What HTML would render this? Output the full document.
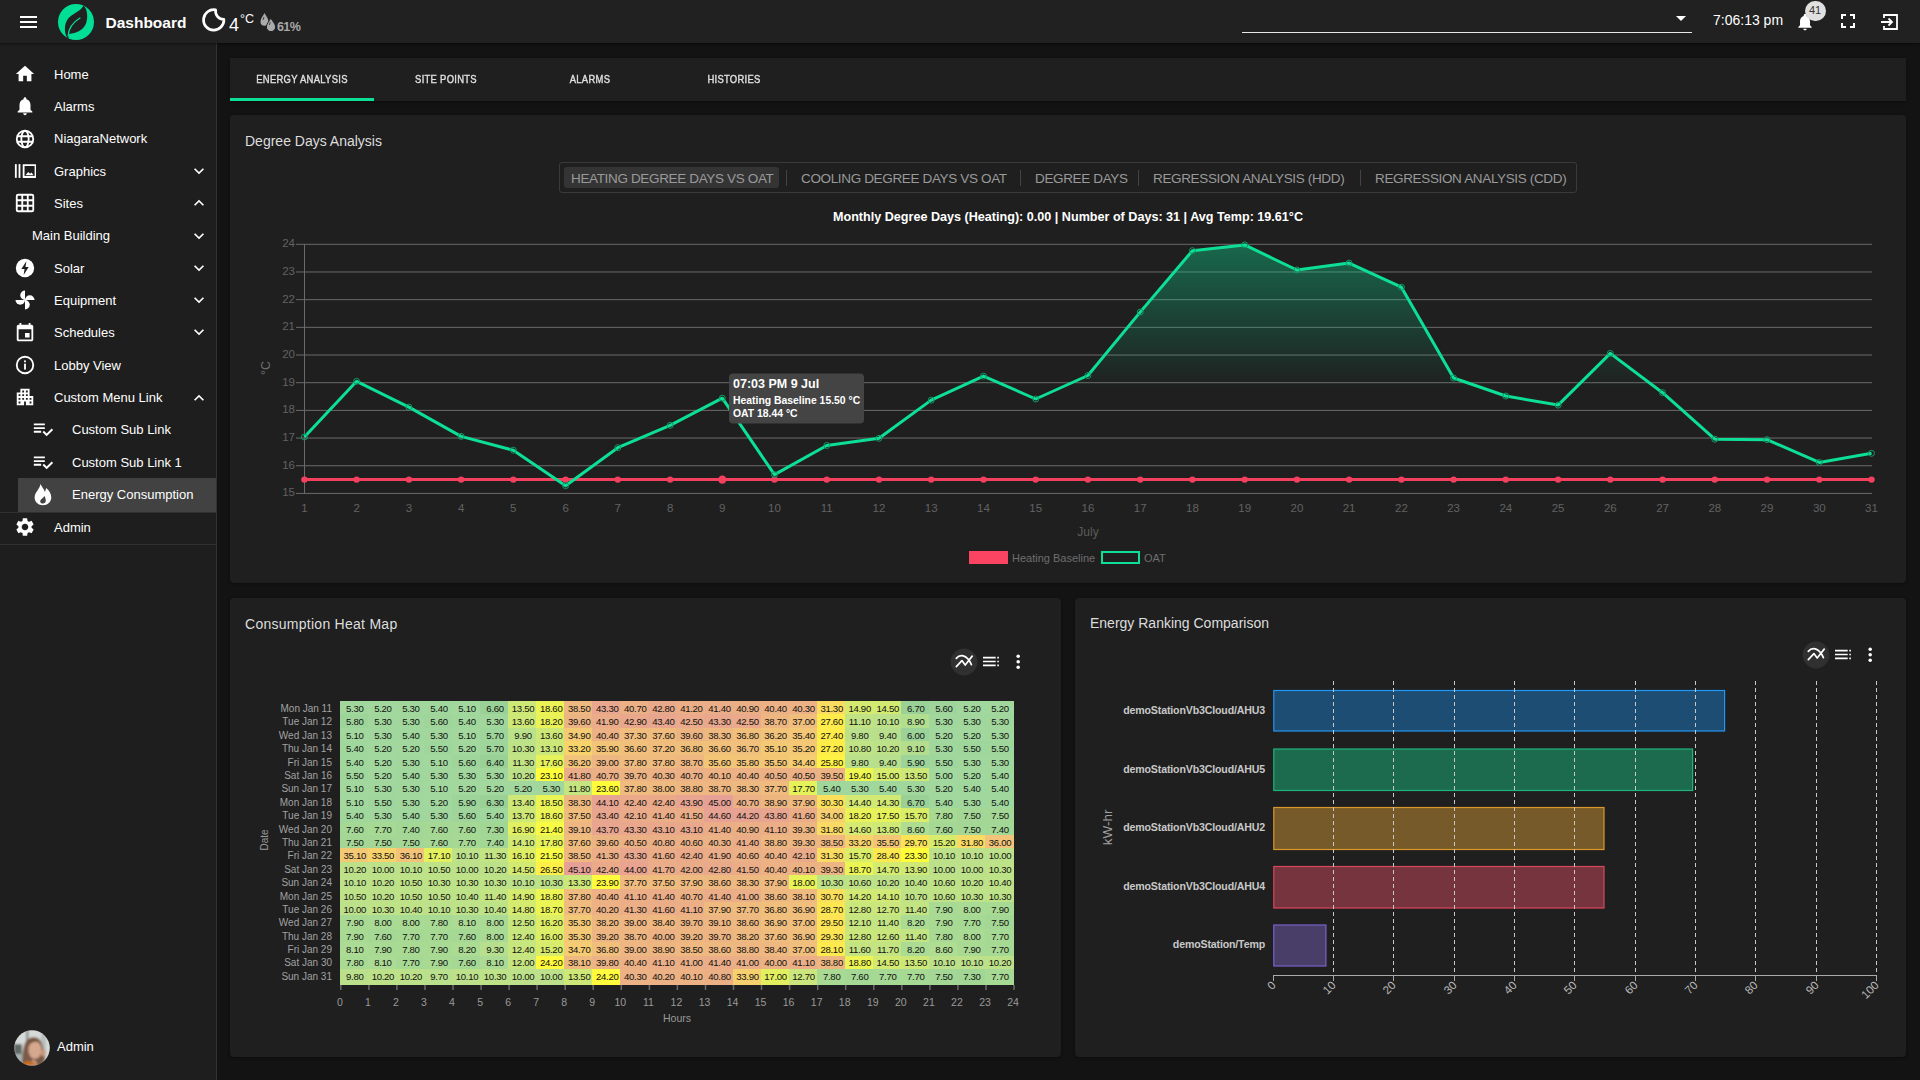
<!DOCTYPE html>
<html><head><meta charset="utf-8">
<style>
*{box-sizing:border-box;margin:0;padding:0}
html,body{width:1920px;height:1080px;overflow:hidden;background:#131313;font-family:"Liberation Sans", sans-serif;color:#fff}
.a{position:absolute}
.t{position:absolute;white-space:nowrap;line-height:1}
svg{position:absolute;overflow:visible}
</style></head><body>

<div class="a" style="left:0;top:43px;width:216px;height:1037px;background:#1e1e1e"></div>
<div class="a" style="left:216px;top:43px;width:1px;height:1037px;background:#333"></div>
<div class="a" style="left:0;top:0;width:1920px;height:43px;background:#212121;box-shadow:0 1px 2px rgba(0,0,0,.5)"></div>
<div class="a" style="left:20px;top:16px;width:17px;height:2px;background:#fff"></div>
<div class="a" style="left:20px;top:21px;width:17px;height:2px;background:#fff"></div>
<div class="a" style="left:20px;top:26px;width:17px;height:2px;background:#fff"></div>
<svg style="left:52px;top:0px" width="48" height="44" viewBox="0 0 48 44">
<circle cx="24" cy="22" r="18" fill="#00df95"/>
<path d="M31.6 5.4 C36.2 10 36 19.5 33.4 24.8 C30.5 30.5 24 33.2 17.2 33.9 L16.2 39 C11.8 33.5 12 25 15.5 19.5 C19.5 13.6 28.2 12 31.6 5.4 Z" fill="#212121"/>
<path d="M16.2 36 C16.5 28.5 20.5 22.5 28 18" stroke="#00df95" stroke-width="1.3" fill="none" stroke-linecap="round"/>
</svg>
<div class="t" style="left:105.5px;top:15px;font-size:15.5px;font-weight:bold;color:#fff">Dashboard</div>
<svg style="left:200px;top:6px" width="28" height="28" viewBox="0 0 28 28">
<path d="M15.6 3.9 A10.2 10.2 0 1 0 23.9 13.4 A8.4 8.4 0 0 1 15.6 3.9 Z" fill="none" stroke="#fff" stroke-width="2.7" stroke-linejoin="round"/>
</svg>
<div class="t" style="left:229px;top:15.5px;font-size:18px;color:#fff">4</div>
<div class="t" style="left:240px;top:13.3px;font-size:12.5px;color:#fff">°C</div>
<svg style="left:258px;top:12px" width="20" height="20" viewBox="0 0 20 20">
<path d="M6.5 1 C8 4 10.5 6.5 10.5 9.8 A4 4 0 0 1 2.5 9.8 C2.5 6.5 5 4 6.5 1Z" fill="#aaa"/>
<path d="M12.8 6 C14.3 9 17.6 12 17.6 15 A4.6 4.6 0 0 1 8.4 15 C8.4 12 11.3 9 12.8 6Z" fill="#aaa" stroke="#212121" stroke-width="1"/>
<path d="M6 5 L5 8" stroke="#444" stroke-width="1"/><path d="M12.3 10 L11.3 13" stroke="#444" stroke-width="1"/>
</svg>
<div class="t" style="left:277px;top:21px;font-size:12.5px;font-weight:bold;letter-spacing:-0.6px;color:#a8a8a8">61%</div>
<div class="a" style="left:1242px;top:32px;width:450px;height:1px;background:#e8e8e8"></div>
<svg style="left:1676px;top:16px" width="10" height="6" viewBox="0 0 10 6"><path d="M0 0h10L5 5z" fill="#fff"/></svg>
<div class="t" style="left:1713px;top:13px;font-size:14px;color:#fff">7:06:13 pm</div>
<svg style="left:1795px;top:12px" width="20" height="20" viewBox="0 0 24 24"><path fill="#fff" d="M12 22c1.1 0 2-.9 2-2h-4c0 1.1.89 2 2 2zm6-6v-5c0-3.07-1.64-5.64-4.5-6.32V4c0-.83-.67-1.5-1.5-1.5s-1.5.67-1.5 1.5v.68C7.63 5.36 6 7.92 6 11v5l-2 2v1h16v-1l-2-2z"/></svg>
<div class="a" style="left:1805px;top:1px;width:21px;height:20px;border-radius:10px;background:#e0e0e0"></div>
<div class="t" style="left:1809px;top:5px;font-size:11px;color:#333">41</div>
<svg style="left:1836px;top:9px" width="24" height="24" viewBox="0 0 24 24"><path fill="#fff" d="M7 14H5v5h5v-2H7v-3zm-2-4h2V7h3V5H5v5zm12 7h-3v2h5v-5h-2v3zM14 5v2h3v3h2V5h-5z"/></svg>
<svg style="left:1880px;top:12px" width="20" height="20" viewBox="0 0 20 20">
<path d="M4 6 V3 H17 V17 H4 V14" fill="none" stroke="#fff" stroke-width="1.8"/>
<path d="M1 10 H12 M8.5 6.5 L12 10 L8.5 13.5" fill="none" stroke="#fff" stroke-width="1.8"/>
</svg>
<div class="a" style="left:18px;top:478px;width:198px;height:34px;background:#424242"></div>
<div class="a" style="left:0;top:512px;width:216px;height:1px;background:#303030"></div>
<div class="a" style="left:0;top:544px;width:216px;height:1px;background:#303030"></div>
<svg style="left:14px;top:63px" width="22" height="22" viewBox="0 0 24 24"><path fill="#fff" d="M10 20v-6h4v6h5v-8h3L12 3 2 12h3v8z"/></svg>
<div class="t" style="left:54px;top:67.9px;font-size:13px;color:#fff">Home</div>
<svg style="left:14px;top:95px" width="22" height="22" viewBox="0 0 24 24"><path fill="#fff" d="M12 22c1.1 0 2-.9 2-2h-4c0 1.1.89 2 2 2zm6-6v-5c0-3.07-1.64-5.64-4.5-6.32V4c0-.83-.67-1.5-1.5-1.5s-1.5.67-1.5 1.5v.68C7.63 5.36 6 7.92 6 11v5l-2 2v1h16v-1l-2-2z"/></svg>
<div class="t" style="left:54px;top:99.9px;font-size:13px;color:#fff">Alarms</div>
<svg style="left:14px;top:128px" width="22" height="22" viewBox="0 0 24 24"><g fill="none" stroke="#fff" stroke-width="2"><circle cx="12" cy="12" r="9"/><ellipse cx="12" cy="12" rx="4" ry="9"/><path d="M3 9h18M3 15h18"/></g></svg>
<div class="t" style="left:54px;top:132.4px;font-size:13px;color:#fff">NiagaraNetwork</div>
<svg style="left:14px;top:160px" width="22" height="22" viewBox="0 0 24 24"><g fill="#fff"><rect x="1" y="4.5" width="2" height="15"/><rect x="5" y="4.5" width="2" height="15"/><path fill-rule="evenodd" d="M10 4.5h13.5a0.5 0.5 0 0 1 .5.5v14a0.5 0.5 0 0 1 -.5.5H10a0.5 0.5 0 0 1 -.5-.5V5a.5.5 0 0 1 .5-.5z M11.5 6.5v11h11v-11z"/><path d="M12.5 16.5 L15.5 13 L17.5 15 L19 13.5 L21.5 16.5Z"/></g></svg>
<div class="t" style="left:54px;top:164.9px;font-size:13px;color:#fff">Graphics</div>
<svg style="left:189px;top:161px" width="20" height="20" viewBox="0 0 24 24"><path fill="#fff" d="M16.59 8.59L12 13.17 7.41 8.59 6 10l6 6 6-6z"/></svg>
<svg style="left:14px;top:192px" width="22" height="22" viewBox="0 0 24 24"><g fill="none" stroke="#fff" stroke-width="2"><rect x="3" y="3" width="18" height="18" rx="1.5"/><path d="M9 3v18M15 3v18M3 9h18M3 15h18"/></g></svg>
<div class="t" style="left:54px;top:196.9px;font-size:13px;color:#fff">Sites</div>
<svg style="left:189px;top:193px" width="20" height="20" viewBox="0 0 24 24"><path fill="#fff" d="M12 8l-6 6 1.41 1.41L12 10.83l4.59 4.58L18 14z"/></svg>
<div class="t" style="left:32px;top:229.4px;font-size:13px;color:#fff">Main Building</div>
<svg style="left:189px;top:226px" width="20" height="20" viewBox="0 0 24 24"><path fill="#fff" d="M16.59 8.59L12 13.17 7.41 8.59 6 10l6 6 6-6z"/></svg>
<svg style="left:14px;top:257px" width="22" height="22" viewBox="0 0 24 24"><circle cx="12" cy="12" r="10" fill="#fff"/><path d="M13.5 4.5 L8 13 H11.5 L10.5 19.5 L16 11 H12.5 Z" fill="#1e1e1e"/></svg>
<div class="t" style="left:54px;top:261.9px;font-size:13px;color:#fff">Solar</div>
<svg style="left:189px;top:258px" width="20" height="20" viewBox="0 0 24 24"><path fill="#fff" d="M16.59 8.59L12 13.17 7.41 8.59 6 10l6 6 6-6z"/></svg>
<svg style="left:13px;top:288.4px" width="24" height="24" viewBox="0 0 24 24"><g fill="#fff"><path d="M12 12 L12 2.5 A4.75 4.75 0 0 0 12 12 Z"/><path d="M12 12 L21.5 12 A4.75 4.75 0 0 0 12 12 Z"/><path d="M12 12 L12 21.5 A4.75 4.75 0 0 0 12 12 Z"/><path d="M12 12 L2.5 12 A4.75 4.75 0 0 0 12 12 Z"/></g></svg>
<div class="t" style="left:54px;top:293.9px;font-size:13px;color:#fff">Equipment</div>
<svg style="left:189px;top:290px" width="20" height="20" viewBox="0 0 24 24"><path fill="#fff" d="M16.59 8.59L12 13.17 7.41 8.59 6 10l6 6 6-6z"/></svg>
<svg style="left:14px;top:322px" width="22" height="22" viewBox="0 0 24 24"><path fill="#fff" d="M17 12h-5v5h5v-5zM16 1v2H8V1H6v2H5c-1.11 0-1.99.9-1.99 2L3 19c0 1.1.89 2 2 2h14c1.1 0 2-.9 2-2V5c0-1.1-.9-2-2-2h-1V1h-2zm3 18H5V8h14v11z"/></svg>
<div class="t" style="left:54px;top:326.4px;font-size:13px;color:#fff">Schedules</div>
<svg style="left:189px;top:322px" width="20" height="20" viewBox="0 0 24 24"><path fill="#fff" d="M16.59 8.59L12 13.17 7.41 8.59 6 10l6 6 6-6z"/></svg>
<svg style="left:14px;top:354px" width="22" height="22" viewBox="0 0 24 24"><g fill="none" stroke="#fff" stroke-width="2"><circle cx="12" cy="12" r="9"/></g><rect x="11" y="10.5" width="2" height="6.5" fill="#fff"/><rect x="11" y="7" width="2" height="2" fill="#fff"/></svg>
<div class="t" style="left:54px;top:358.9px;font-size:13px;color:#fff">Lobby View</div>
<svg style="left:14px;top:386px" width="22" height="22" viewBox="0 0 24 24"><path fill="#fff" d="M17 11V3H7v4H3v14h8v-4h2v4h8V11h-4zM7 19H5v-2h2v2zm0-4H5v-2h2v2zm0-4H5V9h2v2zm4 4H9v-2h2v2zm0-4H9V9h2v2zm0-4H9V5h2v2zm4 8h-2v-2h2v2zm0-4h-2V9h2v2zm0-4h-2V5h2v2zm4 12h-2v-2h2v2zm0-4h-2v-2h2v2z"/></svg>
<div class="t" style="left:54px;top:391.4px;font-size:13px;color:#fff">Custom Menu Link</div>
<svg style="left:189px;top:388px" width="20" height="20" viewBox="0 0 24 24"><path fill="#fff" d="M12 8l-6 6 1.41 1.41L12 10.83l4.59 4.58L18 14z"/></svg>
<svg style="left:32px;top:418px" width="22" height="22" viewBox="0 0 24 24"><path fill="#fff" d="M14 10H2v2h12v-2zm0-4H2v2h12V6zM2 16h8v-2H2v2zm19.5-4.5L23 13l-6.99 7-4.51-4.5L13 14l3.01 3 5.49-5.5z"/></svg>
<div class="t" style="left:72px;top:423.4px;font-size:13px;color:#fff">Custom Sub Link</div>
<svg style="left:32px;top:451px" width="22" height="22" viewBox="0 0 24 24"><path fill="#fff" d="M14 10H2v2h12v-2zm0-4H2v2h12V6zM2 16h8v-2H2v2zm19.5-4.5L23 13l-6.99 7-4.51-4.5L13 14l3.01 3 5.49-5.5z"/></svg>
<div class="t" style="left:72px;top:455.9px;font-size:13px;color:#fff">Custom Sub Link 1</div>
<svg style="left:30px;top:480px" width="24" height="24" viewBox="0 0 24 24"><path fill="#fff" fill-rule="evenodd" d="M10.4 3.9 C11.5 6 14 9 15 12 C15.5 10.5 15.8 9.5 16.1 8 C19.5 10.5 21.3 14 21.3 17.5 C21.3 22 17.5 25.2 13 25.2 C8.4 25.2 4.6 22 4.6 17.5 C4.6 12 10 9 10.4 3.9 Z M14.5 16 C12.5 18.5 10.2 19.5 10.2 21.2 C10.2 22.7 11.5 23.6 12.8 23.6 C14.6 23.6 15.8 22.3 15.8 20.5 C15.8 19 15.2 17.5 14.5 16 Z"/></svg>
<div class="t" style="left:72px;top:488.4px;font-size:13px;color:#fff">Energy Consumption</div>
<svg style="left:14px;top:516px" width="22" height="22" viewBox="0 0 24 24"><path fill="#fff" d="M19.14 12.94c.04-.3.06-.61.06-.94 0-.32-.02-.64-.07-.94l2.03-1.58c.18-.14.23-.41.12-.61l-1.92-3.32c-.12-.22-.37-.29-.59-.22l-2.39.96c-.5-.38-1.03-.7-1.62-.94l-.36-2.54c-.04-.24-.24-.41-.48-.41h-3.84c-.24 0-.43.17-.47.41l-.36 2.54c-.59.24-1.13.57-1.62.94l-2.39-.96c-.22-.08-.47 0-.59.22L2.74 8.87c-.12.21-.08.47.12.61l2.03 1.58c-.05.3-.09.63-.09.94s.02.64.07.94l-2.03 1.58c-.18.14-.23.41-.12.61l1.92 3.32c.12.22.37.29.59.22l2.39-.96c.5.38 1.030.7 1.62.94l.36 2.54c.05.24.24.41.48.41h3.84c.24 0 .44-.17.47-.41l.36-2.54c.59-.24 1.13-.56 1.62-.94l2.39.96c.22.08.47 0 .59-.22l1.92-3.32c.12-.22.07-.47-.12-.61l-2.01-1.58zM12 15.6c-1.98 0-3.6-1.62-3.6-3.6s1.62-3.6 3.6-3.6 3.6 1.62 3.6 3.6-1.62 3.6-3.6 3.6z"/></svg>
<div class="t" style="left:54px;top:521.4px;font-size:13px;color:#fff">Admin</div>
<svg style="left:14px;top:1030px" width="36" height="36" viewBox="0 0 36 36">
<defs><clipPath id="av"><circle cx="18" cy="18" r="17.8"/></clipPath><filter id="avb" x="-10%" y="-10%" width="120%" height="120%"><feGaussianBlur stdDeviation="1"/></filter></defs>
<g clip-path="url(#av)"><g filter="url(#avb)">
<rect x="-2" y="-2" width="40" height="40" fill="#d6dad9"/>
<rect x="12" y="0" width="2.5" height="14" fill="#8a8f8e"/>
<rect x="27" y="4" width="5" height="20" fill="#b9bebd"/>
<rect x="0" y="14" width="8" height="10" fill="#5f6a66"/>
<rect x="0" y="24" width="9" height="10" fill="#a7b0b3"/>
<path d="M8.5 36 C8 28 8.5 18 11.5 12 C14.5 6.5 22 6 25.5 9.5 C28.5 13 29 19 31 25 C32 30 29 34 26 36Z" fill="#7a5a47"/>
<ellipse cx="21" cy="20" rx="6.6" ry="8.8" fill="#d6a98e"/>
<path d="M19 29 C22 31 24 33 23 36 L16 36 C17 33 18 31 19 29Z" fill="#c99a80"/>
<path d="M14 12 C17 9 24 8.5 26.5 13 C23 11 18 11.5 15 14.5Z" fill="#72513d"/>
<ellipse cx="29.5" cy="23" rx="2.5" ry="3.5" fill="#c99a80"/>
<path d="M6 36 C8 32 13 30.5 17 31.5 C20 32.5 22 34 23 36Z" fill="#c9701f"/>
</g></g></svg>
<div class="t" style="left:57px;top:1039.5px;font-size:13px;color:#fff">Admin</div>
<div class="a" style="left:230px;top:58px;width:1676px;height:43px;background:#1f1f1f;box-shadow:0 1px 3px rgba(0,0,0,.4)"></div>
<div class="a" style="left:230px;top:98px;width:144px;height:3px;background:#0ddf96"></div>
<div class="t" style="left:202px;width:200px;text-align:center;top:74.3px;font-size:11.8px;letter-spacing:0.35px;color:#e0e0e0;-webkit-text-stroke:0.4px #e0e0e0;transform:scaleX(0.8)">ENERGY ANALYSIS</div>
<div class="t" style="left:346px;width:200px;text-align:center;top:74.3px;font-size:11.8px;letter-spacing:0.35px;color:#e0e0e0;-webkit-text-stroke:0.4px #e0e0e0;transform:scaleX(0.8)">SITE POINTS</div>
<div class="t" style="left:490px;width:200px;text-align:center;top:74.3px;font-size:11.8px;letter-spacing:0.35px;color:#e0e0e0;-webkit-text-stroke:0.4px #e0e0e0;transform:scaleX(0.8)">ALARMS</div>
<div class="t" style="left:634px;width:200px;text-align:center;top:74.3px;font-size:11.8px;letter-spacing:0.35px;color:#e0e0e0;-webkit-text-stroke:0.4px #e0e0e0;transform:scaleX(0.8)">HISTORIES</div>
<div class="a" style="left:230px;top:115px;width:1676px;height:468px;background:#1f1f1f;border-radius:4px;box-shadow:0 1px 3px rgba(0,0,0,.4)"></div>
<div class="t" style="left:245px;top:134px;font-size:14px;color:#ddd">Degree Days Analysis</div>
<div class="a" style="left:559px;top:162px;width:1018px;height:31px;border:1px solid #3a3a3a;border-radius:3px"></div>
<div class="a" style="left:564px;top:167px;width:215px;height:21px;background:#343434;border-radius:3px"></div>
<div class="t" style="left:571px;top:172px;font-size:13.5px;letter-spacing:-0.35px;color:#9a9a9a">HEATING DEGREE DAYS VS OAT</div>
<div class="t" style="left:801px;top:172px;font-size:13.5px;letter-spacing:-0.35px;color:#9a9a9a">COOLING DEGREE DAYS VS OAT</div>
<div class="t" style="left:1035px;top:172px;font-size:13.5px;letter-spacing:-0.35px;color:#9a9a9a">DEGREE DAYS</div>
<div class="t" style="left:1153px;top:172px;font-size:13.5px;letter-spacing:-0.35px;color:#9a9a9a">REGRESSION ANALYSIS (HDD)</div>
<div class="t" style="left:1375px;top:172px;font-size:13.5px;letter-spacing:-0.35px;color:#9a9a9a">REGRESSION ANALYSIS (CDD)</div>
<div class="a" style="left:786px;top:170px;width:1px;height:16px;background:#444"></div>
<div class="a" style="left:1020px;top:170px;width:1px;height:16px;background:#444"></div>
<div class="a" style="left:1138px;top:170px;width:1px;height:16px;background:#444"></div>
<div class="a" style="left:1360px;top:170px;width:1px;height:16px;background:#444"></div>
<div class="t" style="left:568px;width:1000px;text-align:center;top:211px;font-size:12.6px;font-weight:bold;color:#fff">Monthly Degree Days (Heating): 0.00 | Number of Days: 31 | Avg Temp: 19.61°C</div>
<svg style="left:0;top:0" width="1920" height="1080" viewBox="0 0 1920 1080"><defs><linearGradient id="gf" x1="0" y1="244" x2="0" y2="390" gradientUnits="userSpaceOnUse"><stop offset="0" stop-color="#0ddf96" stop-opacity="0.38"/><stop offset="1" stop-color="#0ddf96" stop-opacity="0"/></linearGradient></defs><line x1="296" y1="493.42" x2="1872" y2="493.42" stroke="#6a6a6a" stroke-width="1"/><text x="295" y="496.42" font-size="11.5" fill="#626262" text-anchor="end" font-family="Liberation Sans">15</text><line x1="296" y1="465.74" x2="1872" y2="465.74" stroke="#6a6a6a" stroke-width="1"/><text x="295" y="468.74" font-size="11.5" fill="#626262" text-anchor="end" font-family="Liberation Sans">16</text><line x1="296" y1="438.06" x2="1872" y2="438.06" stroke="#6a6a6a" stroke-width="1"/><text x="295" y="441.06" font-size="11.5" fill="#626262" text-anchor="end" font-family="Liberation Sans">17</text><line x1="296" y1="410.38" x2="1872" y2="410.38" stroke="#6a6a6a" stroke-width="1"/><text x="295" y="413.38" font-size="11.5" fill="#626262" text-anchor="end" font-family="Liberation Sans">18</text><line x1="296" y1="382.7" x2="1872" y2="382.7" stroke="#6a6a6a" stroke-width="1"/><text x="295" y="385.7" font-size="11.5" fill="#626262" text-anchor="end" font-family="Liberation Sans">19</text><line x1="296" y1="355.02" x2="1872" y2="355.02" stroke="#6a6a6a" stroke-width="1"/><text x="295" y="358.02" font-size="11.5" fill="#626262" text-anchor="end" font-family="Liberation Sans">20</text><line x1="296" y1="327.34" x2="1872" y2="327.34" stroke="#6a6a6a" stroke-width="1"/><text x="295" y="330.34" font-size="11.5" fill="#626262" text-anchor="end" font-family="Liberation Sans">21</text><line x1="296" y1="299.66" x2="1872" y2="299.66" stroke="#6a6a6a" stroke-width="1"/><text x="295" y="302.66" font-size="11.5" fill="#626262" text-anchor="end" font-family="Liberation Sans">22</text><line x1="296" y1="271.98" x2="1872" y2="271.98" stroke="#6a6a6a" stroke-width="1"/><text x="295" y="274.98" font-size="11.5" fill="#626262" text-anchor="end" font-family="Liberation Sans">23</text><line x1="296" y1="244.3" x2="1872" y2="244.3" stroke="#6a6a6a" stroke-width="1"/><text x="295" y="247.3" font-size="11.5" fill="#626262" text-anchor="end" font-family="Liberation Sans">24</text><line x1="304.5" y1="244" x2="304.5" y2="494" stroke="#6a6a6a" stroke-width="1"/><text x="304.4" y="512" font-size="11.5" fill="#626262" text-anchor="middle" font-family="Liberation Sans">1</text><text x="356.6" y="512" font-size="11.5" fill="#626262" text-anchor="middle" font-family="Liberation Sans">2</text><text x="408.9" y="512" font-size="11.5" fill="#626262" text-anchor="middle" font-family="Liberation Sans">3</text><text x="461.1" y="512" font-size="11.5" fill="#626262" text-anchor="middle" font-family="Liberation Sans">4</text><text x="513.3" y="512" font-size="11.5" fill="#626262" text-anchor="middle" font-family="Liberation Sans">5</text><text x="565.6" y="512" font-size="11.5" fill="#626262" text-anchor="middle" font-family="Liberation Sans">6</text><text x="617.8" y="512" font-size="11.5" fill="#626262" text-anchor="middle" font-family="Liberation Sans">7</text><text x="670.1" y="512" font-size="11.5" fill="#626262" text-anchor="middle" font-family="Liberation Sans">8</text><text x="722.3" y="512" font-size="11.5" fill="#626262" text-anchor="middle" font-family="Liberation Sans">9</text><text x="774.5" y="512" font-size="11.5" fill="#626262" text-anchor="middle" font-family="Liberation Sans">10</text><text x="826.8" y="512" font-size="11.5" fill="#626262" text-anchor="middle" font-family="Liberation Sans">11</text><text x="879.0" y="512" font-size="11.5" fill="#626262" text-anchor="middle" font-family="Liberation Sans">12</text><text x="931.2" y="512" font-size="11.5" fill="#626262" text-anchor="middle" font-family="Liberation Sans">13</text><text x="983.5" y="512" font-size="11.5" fill="#626262" text-anchor="middle" font-family="Liberation Sans">14</text><text x="1035.7" y="512" font-size="11.5" fill="#626262" text-anchor="middle" font-family="Liberation Sans">15</text><text x="1087.9" y="512" font-size="11.5" fill="#626262" text-anchor="middle" font-family="Liberation Sans">16</text><text x="1140.2" y="512" font-size="11.5" fill="#626262" text-anchor="middle" font-family="Liberation Sans">17</text><text x="1192.4" y="512" font-size="11.5" fill="#626262" text-anchor="middle" font-family="Liberation Sans">18</text><text x="1244.7" y="512" font-size="11.5" fill="#626262" text-anchor="middle" font-family="Liberation Sans">19</text><text x="1296.9" y="512" font-size="11.5" fill="#626262" text-anchor="middle" font-family="Liberation Sans">20</text><text x="1349.1" y="512" font-size="11.5" fill="#626262" text-anchor="middle" font-family="Liberation Sans">21</text><text x="1401.4" y="512" font-size="11.5" fill="#626262" text-anchor="middle" font-family="Liberation Sans">22</text><text x="1453.6" y="512" font-size="11.5" fill="#626262" text-anchor="middle" font-family="Liberation Sans">23</text><text x="1505.8" y="512" font-size="11.5" fill="#626262" text-anchor="middle" font-family="Liberation Sans">24</text><text x="1558.1" y="512" font-size="11.5" fill="#626262" text-anchor="middle" font-family="Liberation Sans">25</text><text x="1610.3" y="512" font-size="11.5" fill="#626262" text-anchor="middle" font-family="Liberation Sans">26</text><text x="1662.6" y="512" font-size="11.5" fill="#626262" text-anchor="middle" font-family="Liberation Sans">27</text><text x="1714.8" y="512" font-size="11.5" fill="#626262" text-anchor="middle" font-family="Liberation Sans">28</text><text x="1767.0" y="512" font-size="11.5" fill="#626262" text-anchor="middle" font-family="Liberation Sans">29</text><text x="1819.3" y="512" font-size="11.5" fill="#626262" text-anchor="middle" font-family="Liberation Sans">30</text><text x="1871.5" y="512" font-size="11.5" fill="#626262" text-anchor="middle" font-family="Liberation Sans">31</text><text x="1088" y="536" font-size="12" fill="#5c5c5c" text-anchor="middle" font-family="Liberation Sans">July</text><polygon points="304.4,493.4 304.4,437.0 356.6,381.3 408.9,407.1 461.1,436.4 513.3,450.2 565.6,485.7 617.8,447.7 670.1,425.3 722.3,398.2 774.5,474.6 826.8,445.5 879.0,438.3 931.2,400.1 983.5,376.1 1035.7,399.0 1087.9,375.5 1140.2,312.1 1192.4,250.7 1244.7,244.9 1296.9,270.0 1349.1,263.1 1401.4,287.2 1453.6,378.0 1505.8,396.0 1558.1,405.1 1610.3,353.4 1662.6,392.7 1714.8,439.2 1767.0,439.7 1819.3,462.4 1871.5,453.3 1871.5,493.4" fill="url(#gf)"/><line x1="304.4" y1="479.6" x2="1871.5" y2="479.6" stroke="#f2405e" stroke-width="3"/><circle cx="304.4" cy="479.6" r="3.2" fill="#f2405e"/><circle cx="356.6" cy="479.6" r="3.2" fill="#f2405e"/><circle cx="408.9" cy="479.6" r="3.2" fill="#f2405e"/><circle cx="461.1" cy="479.6" r="3.2" fill="#f2405e"/><circle cx="513.3" cy="479.6" r="3.2" fill="#f2405e"/><circle cx="565.6" cy="479.6" r="3.2" fill="#f2405e"/><circle cx="617.8" cy="479.6" r="3.2" fill="#f2405e"/><circle cx="670.1" cy="479.6" r="3.2" fill="#f2405e"/><circle cx="722.3" cy="479.6" r="4.2" fill="#f2405e"/><circle cx="774.5" cy="479.6" r="3.2" fill="#f2405e"/><circle cx="826.8" cy="479.6" r="3.2" fill="#f2405e"/><circle cx="879.0" cy="479.6" r="3.2" fill="#f2405e"/><circle cx="931.2" cy="479.6" r="3.2" fill="#f2405e"/><circle cx="983.5" cy="479.6" r="3.2" fill="#f2405e"/><circle cx="1035.7" cy="479.6" r="3.2" fill="#f2405e"/><circle cx="1087.9" cy="479.6" r="3.2" fill="#f2405e"/><circle cx="1140.2" cy="479.6" r="3.2" fill="#f2405e"/><circle cx="1192.4" cy="479.6" r="3.2" fill="#f2405e"/><circle cx="1244.7" cy="479.6" r="3.2" fill="#f2405e"/><circle cx="1296.9" cy="479.6" r="3.2" fill="#f2405e"/><circle cx="1349.1" cy="479.6" r="3.2" fill="#f2405e"/><circle cx="1401.4" cy="479.6" r="3.2" fill="#f2405e"/><circle cx="1453.6" cy="479.6" r="3.2" fill="#f2405e"/><circle cx="1505.8" cy="479.6" r="3.2" fill="#f2405e"/><circle cx="1558.1" cy="479.6" r="3.2" fill="#f2405e"/><circle cx="1610.3" cy="479.6" r="3.2" fill="#f2405e"/><circle cx="1662.6" cy="479.6" r="3.2" fill="#f2405e"/><circle cx="1714.8" cy="479.6" r="3.2" fill="#f2405e"/><circle cx="1767.0" cy="479.6" r="3.2" fill="#f2405e"/><circle cx="1819.3" cy="479.6" r="3.2" fill="#f2405e"/><circle cx="1871.5" cy="479.6" r="3.2" fill="#f2405e"/><polyline points="304.4,437.0 356.6,381.3 408.9,407.1 461.1,436.4 513.3,450.2 565.6,485.7 617.8,447.7 670.1,425.3 722.3,398.2 774.5,474.6 826.8,445.5 879.0,438.3 931.2,400.1 983.5,376.1 1035.7,399.0 1087.9,375.5 1140.2,312.1 1192.4,250.7 1244.7,244.9 1296.9,270.0 1349.1,263.1 1401.4,287.2 1453.6,378.0 1505.8,396.0 1558.1,405.1 1610.3,353.4 1662.6,392.7 1714.8,439.2 1767.0,439.7 1819.3,462.4 1871.5,453.3" fill="none" stroke="#0ddf96" stroke-width="3" stroke-linejoin="round"/><circle cx="304.4" cy="437.0" r="3" fill="none" stroke="#0f9a66" stroke-width="1"/><circle cx="356.6" cy="381.3" r="3" fill="none" stroke="#0f9a66" stroke-width="1"/><circle cx="408.9" cy="407.1" r="3" fill="none" stroke="#0f9a66" stroke-width="1"/><circle cx="461.1" cy="436.4" r="3" fill="none" stroke="#0f9a66" stroke-width="1"/><circle cx="513.3" cy="450.2" r="3" fill="none" stroke="#0f9a66" stroke-width="1"/><circle cx="565.6" cy="485.7" r="3" fill="none" stroke="#0f9a66" stroke-width="1"/><circle cx="617.8" cy="447.7" r="3" fill="none" stroke="#0f9a66" stroke-width="1"/><circle cx="670.1" cy="425.3" r="3" fill="none" stroke="#0f9a66" stroke-width="1"/><circle cx="722.3" cy="398.2" r="3" fill="none" stroke="#0f9a66" stroke-width="1"/><circle cx="774.5" cy="474.6" r="3" fill="none" stroke="#0f9a66" stroke-width="1"/><circle cx="826.8" cy="445.5" r="3" fill="none" stroke="#0f9a66" stroke-width="1"/><circle cx="879.0" cy="438.3" r="3" fill="none" stroke="#0f9a66" stroke-width="1"/><circle cx="931.2" cy="400.1" r="3" fill="none" stroke="#0f9a66" stroke-width="1"/><circle cx="983.5" cy="376.1" r="3" fill="none" stroke="#0f9a66" stroke-width="1"/><circle cx="1035.7" cy="399.0" r="3" fill="none" stroke="#0f9a66" stroke-width="1"/><circle cx="1087.9" cy="375.5" r="3" fill="none" stroke="#0f9a66" stroke-width="1"/><circle cx="1140.2" cy="312.1" r="3" fill="none" stroke="#0f9a66" stroke-width="1"/><circle cx="1192.4" cy="250.7" r="3" fill="none" stroke="#0f9a66" stroke-width="1"/><circle cx="1244.7" cy="244.9" r="3" fill="none" stroke="#0f9a66" stroke-width="1"/><circle cx="1296.9" cy="270.0" r="3" fill="none" stroke="#0f9a66" stroke-width="1"/><circle cx="1349.1" cy="263.1" r="3" fill="none" stroke="#0f9a66" stroke-width="1"/><circle cx="1401.4" cy="287.2" r="3" fill="none" stroke="#0f9a66" stroke-width="1"/><circle cx="1453.6" cy="378.0" r="3" fill="none" stroke="#0f9a66" stroke-width="1"/><circle cx="1505.8" cy="396.0" r="3" fill="none" stroke="#0f9a66" stroke-width="1"/><circle cx="1558.1" cy="405.1" r="3" fill="none" stroke="#0f9a66" stroke-width="1"/><circle cx="1610.3" cy="353.4" r="3" fill="none" stroke="#0f9a66" stroke-width="1"/><circle cx="1662.6" cy="392.7" r="3" fill="none" stroke="#0f9a66" stroke-width="1"/><circle cx="1714.8" cy="439.2" r="3" fill="none" stroke="#0f9a66" stroke-width="1"/><circle cx="1767.0" cy="439.7" r="3" fill="none" stroke="#0f9a66" stroke-width="1"/><circle cx="1819.3" cy="462.4" r="3" fill="none" stroke="#0f9a66" stroke-width="1"/><circle cx="1871.5" cy="453.3" r="3" fill="none" stroke="#0f9a66" stroke-width="1"/><rect x="729" y="373.5" width="135" height="50" rx="4" fill="#444"/><text x="733" y="387.5" font-size="12.5" font-weight="bold" fill="#fff" font-family="Liberation Sans">07:03 PM 9 Jul</text><text x="733" y="403.5" font-size="10.4" font-weight="bold" fill="#fff" font-family="Liberation Sans">Heating Baseline 15.50 °C</text><text x="733" y="416.5" font-size="10.4" font-weight="bold" fill="#fff" font-family="Liberation Sans">OAT 18.44 °C</text><text x="0" y="0" font-size="12.5" fill="#6e6e6e" text-anchor="middle" font-family="Liberation Sans" transform="translate(270,368) rotate(-90)">°C</text><rect x="969" y="551" width="39" height="13" fill="#fb4461"/><text x="1012" y="561.5" font-size="11" fill="#6e6e6e" font-family="Liberation Sans">Heating Baseline</text><rect x="1102" y="552" width="37" height="11" fill="none" stroke="#0ddf96" stroke-width="2"/><text x="1144" y="561.5" font-size="11" fill="#6e6e6e" font-family="Liberation Sans">OAT</text></svg>
<div class="a" style="left:230px;top:598px;width:831px;height:459px;background:#1f1f1f;border-radius:4px;box-shadow:0 1px 3px rgba(0,0,0,.4)"></div>
<div class="t" style="left:245px;top:616.5px;font-size:14px;letter-spacing:0.27px;color:#ddd">Consumption Heat Map</div>
<svg style="left:951px;top:648.5px" width="80" height="26" viewBox="0 0 80 26"><circle cx="13" cy="13" r="13.4" fill="#303030"/><path d="M5.3 17.6 L10.9 11.6 L14.2 16 L21.2 7.1" fill="none" stroke="#fff" stroke-width="1.7" stroke-linecap="round" stroke-linejoin="round"/><path d="M5.3 9.4 C8.5 5.5 15.5 4.5 20.4 15.6" fill="none" stroke="#fff" stroke-width="1.7" stroke-linecap="round"/><path d="M32 8.7 H44.7 M32 12.5 H44.7 M32 16.3 H44.7" stroke="#fff" stroke-width="1.7"/><path d="M46.3 8.7 H47.9 M46.3 12.5 H47.9 M46.3 16.3 H47.9" stroke="#fff" stroke-width="1.7"/><circle cx="67.2" cy="7.3" r="1.75" fill="#fff"/><circle cx="67.2" cy="12.8" r="1.75" fill="#fff"/><circle cx="67.2" cy="18.3" r="1.75" fill="#fff"/></svg>
<svg style="left:0;top:0" width="1920" height="1080" viewBox="0 0 1920 1080" shape-rendering="crispEdges"><rect x="339.80" y="701.00" width="28.65" height="14.00" fill="rgb(161, 215, 156)"/><rect x="367.85" y="701.00" width="28.65" height="14.00" fill="rgb(162, 216, 157)"/><rect x="395.90" y="701.00" width="28.65" height="14.00" fill="rgb(161, 215, 156)"/><rect x="423.95" y="701.00" width="28.65" height="14.00" fill="rgb(160, 215, 156)"/><rect x="452.00" y="701.00" width="28.65" height="14.00" fill="rgb(162, 216, 157)"/><rect x="480.05" y="701.00" width="28.65" height="14.00" fill="rgb(153, 209, 150)"/><rect x="508.10" y="701.00" width="28.65" height="14.00" fill="rgb(206, 232, 120)"/><rect x="536.15" y="701.00" width="28.65" height="14.00" fill="rgb(235, 244, 84)"/><rect x="564.20" y="701.00" width="28.65" height="14.00" fill="rgb(238, 184, 128)"/><rect x="592.25" y="701.00" width="28.65" height="14.00" fill="rgb(233, 167, 142)"/><rect x="620.30" y="701.00" width="28.65" height="14.00" fill="rgb(235, 176, 134)"/><rect x="648.35" y="701.00" width="28.65" height="14.00" fill="rgb(233, 169, 139)"/><rect x="676.40" y="701.00" width="28.65" height="14.00" fill="rgb(235, 174, 135)"/><rect x="704.45" y="701.00" width="28.65" height="14.00" fill="rgb(235, 173, 136)"/><rect x="732.50" y="701.00" width="28.65" height="14.00" fill="rgb(235, 175, 134)"/><rect x="760.55" y="701.00" width="28.65" height="14.00" fill="rgb(236, 177, 133)"/><rect x="788.60" y="701.00" width="28.65" height="14.00" fill="rgb(236, 177, 133)"/><rect x="816.65" y="701.00" width="28.65" height="14.00" fill="rgb(250, 220, 97)"/><rect x="844.70" y="701.00" width="28.65" height="14.00" fill="rgb(213, 235, 111)"/><rect x="872.75" y="701.00" width="28.65" height="14.00" fill="rgb(211, 234, 114)"/><rect x="900.80" y="701.00" width="28.65" height="14.00" fill="rgb(154, 209, 150)"/><rect x="928.85" y="701.00" width="28.65" height="14.00" fill="rgb(159, 213, 155)"/><rect x="956.90" y="701.00" width="28.65" height="14.00" fill="rgb(162, 216, 157)"/><rect x="984.95" y="701.00" width="28.65" height="14.00" fill="rgb(162, 216, 157)"/><rect x="339.80" y="714.40" width="28.65" height="14.00" fill="rgb(157, 212, 154)"/><rect x="367.85" y="714.40" width="28.65" height="14.00" fill="rgb(161, 215, 156)"/><rect x="395.90" y="714.40" width="28.65" height="14.00" fill="rgb(161, 215, 156)"/><rect x="423.95" y="714.40" width="28.65" height="14.00" fill="rgb(159, 213, 155)"/><rect x="452.00" y="714.40" width="28.65" height="14.00" fill="rgb(160, 215, 156)"/><rect x="480.05" y="714.40" width="28.65" height="14.00" fill="rgb(161, 215, 156)"/><rect x="508.10" y="714.40" width="28.65" height="14.00" fill="rgb(206, 232, 120)"/><rect x="536.15" y="714.40" width="28.65" height="14.00" fill="rgb(233, 243, 87)"/><rect x="564.20" y="714.40" width="28.65" height="14.00" fill="rgb(237, 180, 131)"/><rect x="592.25" y="714.40" width="28.65" height="14.00" fill="rgb(234, 172, 137)"/><rect x="620.30" y="714.40" width="28.65" height="14.00" fill="rgb(233, 168, 140)"/><rect x="648.35" y="714.40" width="28.65" height="14.00" fill="rgb(232, 166, 142)"/><rect x="676.40" y="714.40" width="28.65" height="14.00" fill="rgb(234, 170, 139)"/><rect x="704.45" y="714.40" width="28.65" height="14.00" fill="rgb(233, 167, 142)"/><rect x="732.50" y="714.40" width="28.65" height="14.00" fill="rgb(234, 170, 139)"/><rect x="760.55" y="714.40" width="28.65" height="14.00" fill="rgb(238, 183, 129)"/><rect x="788.60" y="714.40" width="28.65" height="14.00" fill="rgb(240, 190, 125)"/><rect x="816.65" y="714.40" width="28.65" height="14.00" fill="rgb(253, 236, 75)"/><rect x="844.70" y="714.40" width="28.65" height="14.00" fill="rgb(194, 227, 132)"/><rect x="872.75" y="714.40" width="28.65" height="14.00" fill="rgb(188, 225, 138)"/><rect x="900.80" y="714.40" width="28.65" height="14.00" fill="rgb(178, 222, 144)"/><rect x="928.85" y="714.40" width="28.65" height="14.00" fill="rgb(161, 215, 156)"/><rect x="956.90" y="714.40" width="28.65" height="14.00" fill="rgb(161, 215, 156)"/><rect x="984.95" y="714.40" width="28.65" height="14.00" fill="rgb(161, 215, 156)"/><rect x="339.80" y="727.80" width="28.65" height="14.00" fill="rgb(162, 216, 157)"/><rect x="367.85" y="727.80" width="28.65" height="14.00" fill="rgb(161, 215, 156)"/><rect x="395.90" y="727.80" width="28.65" height="14.00" fill="rgb(160, 215, 156)"/><rect x="423.95" y="727.80" width="28.65" height="14.00" fill="rgb(161, 215, 156)"/><rect x="452.00" y="727.80" width="28.65" height="14.00" fill="rgb(162, 216, 157)"/><rect x="480.05" y="727.80" width="28.65" height="14.00" fill="rgb(158, 213, 154)"/><rect x="508.10" y="727.80" width="28.65" height="14.00" fill="rgb(187, 225, 138)"/><rect x="536.15" y="727.80" width="28.65" height="14.00" fill="rgb(206, 232, 120)"/><rect x="564.20" y="727.80" width="28.65" height="14.00" fill="rgb(244, 202, 116)"/><rect x="592.25" y="727.80" width="28.65" height="14.00" fill="rgb(236, 177, 133)"/><rect x="620.30" y="727.80" width="28.65" height="14.00" fill="rgb(240, 189, 126)"/><rect x="648.35" y="727.80" width="28.65" height="14.00" fill="rgb(239, 188, 126)"/><rect x="676.40" y="727.80" width="28.65" height="14.00" fill="rgb(237, 180, 131)"/><rect x="704.45" y="727.80" width="28.65" height="14.00" fill="rgb(238, 185, 128)"/><rect x="732.50" y="727.80" width="28.65" height="14.00" fill="rgb(240, 191, 124)"/><rect x="760.55" y="727.80" width="28.65" height="14.00" fill="rgb(242, 195, 122)"/><rect x="788.60" y="727.80" width="28.65" height="14.00" fill="rgb(243, 199, 118)"/><rect x="816.65" y="727.80" width="28.65" height="14.00" fill="rgb(254, 236, 74)"/><rect x="844.70" y="727.80" width="28.65" height="14.00" fill="rgb(186, 224, 139)"/><rect x="872.75" y="727.80" width="28.65" height="14.00" fill="rgb(183, 223, 141)"/><rect x="900.80" y="727.80" width="28.65" height="14.00" fill="rgb(156, 211, 153)"/><rect x="928.85" y="727.80" width="28.65" height="14.00" fill="rgb(162, 216, 157)"/><rect x="956.90" y="727.80" width="28.65" height="14.00" fill="rgb(162, 216, 157)"/><rect x="984.95" y="727.80" width="28.65" height="14.00" fill="rgb(161, 215, 156)"/><rect x="339.80" y="741.20" width="28.65" height="14.00" fill="rgb(160, 215, 156)"/><rect x="367.85" y="741.20" width="28.65" height="14.00" fill="rgb(162, 216, 157)"/><rect x="395.90" y="741.20" width="28.65" height="14.00" fill="rgb(162, 216, 157)"/><rect x="423.95" y="741.20" width="28.65" height="14.00" fill="rgb(159, 214, 155)"/><rect x="452.00" y="741.20" width="28.65" height="14.00" fill="rgb(162, 216, 157)"/><rect x="480.05" y="741.20" width="28.65" height="14.00" fill="rgb(158, 213, 154)"/><rect x="508.10" y="741.20" width="28.65" height="14.00" fill="rgb(190, 226, 136)"/><rect x="536.15" y="741.20" width="28.65" height="14.00" fill="rgb(204, 231, 122)"/><rect x="564.20" y="741.20" width="28.65" height="14.00" fill="rgb(247, 211, 107)"/><rect x="592.25" y="741.20" width="28.65" height="14.00" fill="rgb(242, 196, 120)"/><rect x="620.30" y="741.20" width="28.65" height="14.00" fill="rgb(241, 192, 123)"/><rect x="648.35" y="741.20" width="28.65" height="14.00" fill="rgb(240, 189, 125)"/><rect x="676.40" y="741.20" width="28.65" height="14.00" fill="rgb(240, 191, 124)"/><rect x="704.45" y="741.20" width="28.65" height="14.00" fill="rgb(241, 192, 123)"/><rect x="732.50" y="741.20" width="28.65" height="14.00" fill="rgb(241, 192, 124)"/><rect x="760.55" y="741.20" width="28.65" height="14.00" fill="rgb(244, 201, 117)"/><rect x="788.60" y="741.20" width="28.65" height="14.00" fill="rgb(244, 200, 117)"/><rect x="816.65" y="741.20" width="28.65" height="14.00" fill="rgb(254, 237, 73)"/><rect x="844.70" y="741.20" width="28.65" height="14.00" fill="rgb(192, 227, 134)"/><rect x="872.75" y="741.20" width="28.65" height="14.00" fill="rgb(189, 225, 137)"/><rect x="900.80" y="741.20" width="28.65" height="14.00" fill="rgb(180, 222, 142)"/><rect x="928.85" y="741.20" width="28.65" height="14.00" fill="rgb(161, 215, 156)"/><rect x="956.90" y="741.20" width="28.65" height="14.00" fill="rgb(159, 214, 155)"/><rect x="984.95" y="741.20" width="28.65" height="14.00" fill="rgb(159, 214, 155)"/><rect x="339.80" y="754.60" width="28.65" height="14.00" fill="rgb(160, 215, 156)"/><rect x="367.85" y="754.60" width="28.65" height="14.00" fill="rgb(162, 216, 157)"/><rect x="395.90" y="754.60" width="28.65" height="14.00" fill="rgb(161, 215, 156)"/><rect x="423.95" y="754.60" width="28.65" height="14.00" fill="rgb(162, 216, 157)"/><rect x="452.00" y="754.60" width="28.65" height="14.00" fill="rgb(159, 213, 155)"/><rect x="480.05" y="754.60" width="28.65" height="14.00" fill="rgb(153, 209, 151)"/><rect x="508.10" y="754.60" width="28.65" height="14.00" fill="rgb(194, 228, 132)"/><rect x="536.15" y="754.60" width="28.65" height="14.00" fill="rgb(230, 242, 91)"/><rect x="564.20" y="754.60" width="28.65" height="14.00" fill="rgb(242, 195, 122)"/><rect x="592.25" y="754.60" width="28.65" height="14.00" fill="rgb(237, 182, 130)"/><rect x="620.30" y="754.60" width="28.65" height="14.00" fill="rgb(239, 187, 127)"/><rect x="648.35" y="754.60" width="28.65" height="14.00" fill="rgb(239, 187, 127)"/><rect x="676.40" y="754.60" width="28.65" height="14.00" fill="rgb(238, 183, 129)"/><rect x="704.45" y="754.60" width="28.65" height="14.00" fill="rgb(243, 198, 119)"/><rect x="732.50" y="754.60" width="28.65" height="14.00" fill="rgb(242, 197, 120)"/><rect x="760.55" y="754.60" width="28.65" height="14.00" fill="rgb(243, 198, 118)"/><rect x="788.60" y="754.60" width="28.65" height="14.00" fill="rgb(245, 205, 114)"/><rect x="816.65" y="754.60" width="28.65" height="14.00" fill="rgb(254, 243, 68)"/><rect x="844.70" y="754.60" width="28.65" height="14.00" fill="rgb(186, 224, 139)"/><rect x="872.75" y="754.60" width="28.65" height="14.00" fill="rgb(183, 223, 141)"/><rect x="900.80" y="754.60" width="28.65" height="14.00" fill="rgb(156, 212, 153)"/><rect x="928.85" y="754.60" width="28.65" height="14.00" fill="rgb(159, 214, 155)"/><rect x="956.90" y="754.60" width="28.65" height="14.00" fill="rgb(161, 215, 156)"/><rect x="984.95" y="754.60" width="28.65" height="14.00" fill="rgb(161, 215, 156)"/><rect x="339.80" y="768.00" width="28.65" height="14.00" fill="rgb(159, 214, 155)"/><rect x="367.85" y="768.00" width="28.65" height="14.00" fill="rgb(162, 216, 157)"/><rect x="395.90" y="768.00" width="28.65" height="14.00" fill="rgb(160, 215, 156)"/><rect x="423.95" y="768.00" width="28.65" height="14.00" fill="rgb(161, 215, 156)"/><rect x="452.00" y="768.00" width="28.65" height="14.00" fill="rgb(161, 215, 156)"/><rect x="480.05" y="768.00" width="28.65" height="14.00" fill="rgb(161, 215, 156)"/><rect x="508.10" y="768.00" width="28.65" height="14.00" fill="rgb(189, 225, 137)"/><rect x="536.15" y="768.00" width="28.65" height="14.00" fill="rgb(255, 255, 58)"/><rect x="564.20" y="768.00" width="28.65" height="14.00" fill="rgb(234, 172, 137)"/><rect x="592.25" y="768.00" width="28.65" height="14.00" fill="rgb(235, 176, 134)"/><rect x="620.30" y="768.00" width="28.65" height="14.00" fill="rgb(236, 179, 131)"/><rect x="648.35" y="768.00" width="28.65" height="14.00" fill="rgb(236, 177, 133)"/><rect x="676.40" y="768.00" width="28.65" height="14.00" fill="rgb(235, 176, 134)"/><rect x="704.45" y="768.00" width="28.65" height="14.00" fill="rgb(236, 178, 132)"/><rect x="732.50" y="768.00" width="28.65" height="14.00" fill="rgb(236, 177, 133)"/><rect x="760.55" y="768.00" width="28.65" height="14.00" fill="rgb(236, 176, 133)"/><rect x="788.60" y="768.00" width="28.65" height="14.00" fill="rgb(236, 176, 133)"/><rect x="816.65" y="768.00" width="28.65" height="14.00" fill="rgb(237, 180, 131)"/><rect x="844.70" y="768.00" width="28.65" height="14.00" fill="rgb(238, 246, 80)"/><rect x="872.75" y="768.00" width="28.65" height="14.00" fill="rgb(214, 236, 110)"/><rect x="900.80" y="768.00" width="28.65" height="14.00" fill="rgb(206, 232, 120)"/><rect x="928.85" y="768.00" width="28.65" height="14.00" fill="rgb(163, 217, 158)"/><rect x="956.90" y="768.00" width="28.65" height="14.00" fill="rgb(162, 216, 157)"/><rect x="984.95" y="768.00" width="28.65" height="14.00" fill="rgb(160, 215, 156)"/><rect x="339.80" y="781.40" width="28.65" height="14.00" fill="rgb(162, 216, 157)"/><rect x="367.85" y="781.40" width="28.65" height="14.00" fill="rgb(161, 215, 156)"/><rect x="395.90" y="781.40" width="28.65" height="14.00" fill="rgb(161, 215, 156)"/><rect x="423.95" y="781.40" width="28.65" height="14.00" fill="rgb(162, 216, 157)"/><rect x="452.00" y="781.40" width="28.65" height="14.00" fill="rgb(162, 216, 157)"/><rect x="480.05" y="781.40" width="28.65" height="14.00" fill="rgb(162, 216, 157)"/><rect x="508.10" y="781.40" width="28.65" height="14.00" fill="rgb(162, 216, 157)"/><rect x="536.15" y="781.40" width="28.65" height="14.00" fill="rgb(161, 215, 156)"/><rect x="564.20" y="781.40" width="28.65" height="14.00" fill="rgb(197, 229, 129)"/><rect x="592.25" y="781.40" width="28.65" height="14.00" fill="rgb(255, 252, 60)"/><rect x="620.30" y="781.40" width="28.65" height="14.00" fill="rgb(239, 187, 127)"/><rect x="648.35" y="781.40" width="28.65" height="14.00" fill="rgb(239, 186, 127)"/><rect x="676.40" y="781.40" width="28.65" height="14.00" fill="rgb(238, 183, 129)"/><rect x="704.45" y="781.40" width="28.65" height="14.00" fill="rgb(238, 183, 129)"/><rect x="732.50" y="781.40" width="28.65" height="14.00" fill="rgb(238, 185, 128)"/><rect x="760.55" y="781.40" width="28.65" height="14.00" fill="rgb(239, 187, 127)"/><rect x="788.60" y="781.40" width="28.65" height="14.00" fill="rgb(230, 242, 90)"/><rect x="816.65" y="781.40" width="28.65" height="14.00" fill="rgb(160, 215, 156)"/><rect x="844.70" y="781.40" width="28.65" height="14.00" fill="rgb(161, 215, 156)"/><rect x="872.75" y="781.40" width="28.65" height="14.00" fill="rgb(160, 215, 156)"/><rect x="900.80" y="781.40" width="28.65" height="14.00" fill="rgb(161, 215, 156)"/><rect x="928.85" y="781.40" width="28.65" height="14.00" fill="rgb(162, 216, 157)"/><rect x="956.90" y="781.40" width="28.65" height="14.00" fill="rgb(160, 215, 156)"/><rect x="984.95" y="781.40" width="28.65" height="14.00" fill="rgb(160, 215, 156)"/><rect x="339.80" y="794.80" width="28.65" height="14.00" fill="rgb(162, 216, 157)"/><rect x="367.85" y="794.80" width="28.65" height="14.00" fill="rgb(159, 214, 155)"/><rect x="395.90" y="794.80" width="28.65" height="14.00" fill="rgb(161, 215, 156)"/><rect x="423.95" y="794.80" width="28.65" height="14.00" fill="rgb(162, 216, 157)"/><rect x="452.00" y="794.80" width="28.65" height="14.00" fill="rgb(156, 212, 153)"/><rect x="480.05" y="794.80" width="28.65" height="14.00" fill="rgb(153, 209, 151)"/><rect x="508.10" y="794.80" width="28.65" height="14.00" fill="rgb(205, 232, 121)"/><rect x="536.15" y="794.80" width="28.65" height="14.00" fill="rgb(234, 244, 85)"/><rect x="564.20" y="794.80" width="28.65" height="14.00" fill="rgb(238, 185, 128)"/><rect x="592.25" y="794.80" width="28.65" height="14.00" fill="rgb(231, 164, 146)"/><rect x="620.30" y="794.80" width="28.65" height="14.00" fill="rgb(234, 170, 138)"/><rect x="648.35" y="794.80" width="28.65" height="14.00" fill="rgb(234, 170, 138)"/><rect x="676.40" y="794.80" width="28.65" height="14.00" fill="rgb(232, 164, 144)"/><rect x="704.45" y="794.80" width="28.65" height="14.00" fill="rgb(230, 160, 150)"/><rect x="732.50" y="794.80" width="28.65" height="14.00" fill="rgb(235, 176, 134)"/><rect x="760.55" y="794.80" width="28.65" height="14.00" fill="rgb(237, 182, 129)"/><rect x="788.60" y="794.80" width="28.65" height="14.00" fill="rgb(239, 186, 127)"/><rect x="816.65" y="794.80" width="28.65" height="14.00" fill="rgb(251, 225, 91)"/><rect x="844.70" y="794.80" width="28.65" height="14.00" fill="rgb(210, 234, 115)"/><rect x="872.75" y="794.80" width="28.65" height="14.00" fill="rgb(210, 234, 116)"/><rect x="900.80" y="794.80" width="28.65" height="14.00" fill="rgb(154, 209, 150)"/><rect x="928.85" y="794.80" width="28.65" height="14.00" fill="rgb(160, 215, 156)"/><rect x="956.90" y="794.80" width="28.65" height="14.00" fill="rgb(161, 215, 156)"/><rect x="984.95" y="794.80" width="28.65" height="14.00" fill="rgb(160, 215, 156)"/><rect x="339.80" y="808.20" width="28.65" height="14.00" fill="rgb(160, 215, 156)"/><rect x="367.85" y="808.20" width="28.65" height="14.00" fill="rgb(161, 215, 156)"/><rect x="395.90" y="808.20" width="28.65" height="14.00" fill="rgb(160, 215, 156)"/><rect x="423.95" y="808.20" width="28.65" height="14.00" fill="rgb(161, 215, 156)"/><rect x="452.00" y="808.20" width="28.65" height="14.00" fill="rgb(159, 213, 155)"/><rect x="480.05" y="808.20" width="28.65" height="14.00" fill="rgb(160, 215, 156)"/><rect x="508.10" y="808.20" width="28.65" height="14.00" fill="rgb(206, 232, 120)"/><rect x="536.15" y="808.20" width="28.65" height="14.00" fill="rgb(235, 244, 84)"/><rect x="564.20" y="808.20" width="28.65" height="14.00" fill="rgb(239, 188, 126)"/><rect x="592.25" y="808.20" width="28.65" height="14.00" fill="rgb(232, 166, 142)"/><rect x="620.30" y="808.20" width="28.65" height="14.00" fill="rgb(234, 171, 138)"/><rect x="648.35" y="808.20" width="28.65" height="14.00" fill="rgb(235, 173, 136)"/><rect x="676.40" y="808.20" width="28.65" height="14.00" fill="rgb(234, 173, 136)"/><rect x="704.45" y="808.20" width="28.65" height="14.00" fill="rgb(231, 162, 148)"/><rect x="732.50" y="808.20" width="28.65" height="14.00" fill="rgb(231, 163, 146)"/><rect x="760.55" y="808.20" width="28.65" height="14.00" fill="rgb(232, 165, 144)"/><rect x="788.60" y="808.20" width="28.65" height="14.00" fill="rgb(234, 173, 136)"/><rect x="816.65" y="808.20" width="28.65" height="14.00" fill="rgb(246, 207, 112)"/><rect x="844.70" y="808.20" width="28.65" height="14.00" fill="rgb(233, 243, 87)"/><rect x="872.75" y="808.20" width="28.65" height="14.00" fill="rgb(229, 242, 92)"/><rect x="900.80" y="808.20" width="28.65" height="14.00" fill="rgb(218, 237, 105)"/><rect x="928.85" y="808.20" width="28.65" height="14.00" fill="rgb(168, 218, 148)"/><rect x="956.90" y="808.20" width="28.65" height="14.00" fill="rgb(164, 215, 149)"/><rect x="984.95" y="808.20" width="28.65" height="14.00" fill="rgb(164, 215, 149)"/><rect x="339.80" y="821.60" width="28.65" height="14.00" fill="rgb(165, 216, 149)"/><rect x="367.85" y="821.60" width="28.65" height="14.00" fill="rgb(166, 217, 148)"/><rect x="395.90" y="821.60" width="28.65" height="14.00" fill="rgb(163, 215, 149)"/><rect x="423.95" y="821.60" width="28.65" height="14.00" fill="rgb(165, 216, 149)"/><rect x="452.00" y="821.60" width="28.65" height="14.00" fill="rgb(165, 216, 149)"/><rect x="480.05" y="821.60" width="28.65" height="14.00" fill="rgb(162, 214, 149)"/><rect x="508.10" y="821.60" width="28.65" height="14.00" fill="rgb(225, 240, 96)"/><rect x="536.15" y="821.60" width="28.65" height="14.00" fill="rgb(248, 251, 68)"/><rect x="564.20" y="821.60" width="28.65" height="14.00" fill="rgb(237, 182, 130)"/><rect x="592.25" y="821.60" width="28.65" height="14.00" fill="rgb(232, 165, 144)"/><rect x="620.30" y="821.60" width="28.65" height="14.00" fill="rgb(233, 167, 142)"/><rect x="648.35" y="821.60" width="28.65" height="14.00" fill="rgb(233, 168, 140)"/><rect x="676.40" y="821.60" width="28.65" height="14.00" fill="rgb(233, 168, 140)"/><rect x="704.45" y="821.60" width="28.65" height="14.00" fill="rgb(235, 173, 136)"/><rect x="732.50" y="821.60" width="28.65" height="14.00" fill="rgb(235, 175, 134)"/><rect x="760.55" y="821.60" width="28.65" height="14.00" fill="rgb(235, 174, 135)"/><rect x="788.60" y="821.60" width="28.65" height="14.00" fill="rgb(237, 181, 130)"/><rect x="816.65" y="821.60" width="28.65" height="14.00" fill="rgb(249, 218, 100)"/><rect x="844.70" y="821.60" width="28.65" height="14.00" fill="rgb(212, 234, 114)"/><rect x="872.75" y="821.60" width="28.65" height="14.00" fill="rgb(207, 233, 119)"/><rect x="900.80" y="821.60" width="28.65" height="14.00" fill="rgb(175, 221, 145)"/><rect x="928.85" y="821.60" width="28.65" height="14.00" fill="rgb(165, 216, 149)"/><rect x="956.90" y="821.60" width="28.65" height="14.00" fill="rgb(164, 215, 149)"/><rect x="984.95" y="821.60" width="28.65" height="14.00" fill="rgb(163, 215, 149)"/><rect x="339.80" y="835.00" width="28.65" height="14.00" fill="rgb(164, 215, 149)"/><rect x="367.85" y="835.00" width="28.65" height="14.00" fill="rgb(164, 215, 149)"/><rect x="395.90" y="835.00" width="28.65" height="14.00" fill="rgb(164, 215, 149)"/><rect x="423.95" y="835.00" width="28.65" height="14.00" fill="rgb(165, 216, 149)"/><rect x="452.00" y="835.00" width="28.65" height="14.00" fill="rgb(166, 217, 148)"/><rect x="480.05" y="835.00" width="28.65" height="14.00" fill="rgb(163, 215, 149)"/><rect x="508.10" y="835.00" width="28.65" height="14.00" fill="rgb(209, 233, 117)"/><rect x="536.15" y="835.00" width="28.65" height="14.00" fill="rgb(231, 242, 90)"/><rect x="564.20" y="835.00" width="28.65" height="14.00" fill="rgb(239, 188, 126)"/><rect x="592.25" y="835.00" width="28.65" height="14.00" fill="rgb(237, 180, 131)"/><rect x="620.30" y="835.00" width="28.65" height="14.00" fill="rgb(236, 176, 133)"/><rect x="648.35" y="835.00" width="28.65" height="14.00" fill="rgb(235, 175, 134)"/><rect x="676.40" y="835.00" width="28.65" height="14.00" fill="rgb(235, 176, 134)"/><rect x="704.45" y="835.00" width="28.65" height="14.00" fill="rgb(236, 177, 133)"/><rect x="732.50" y="835.00" width="28.65" height="14.00" fill="rgb(235, 173, 136)"/><rect x="760.55" y="835.00" width="28.65" height="14.00" fill="rgb(238, 183, 129)"/><rect x="788.60" y="835.00" width="28.65" height="14.00" fill="rgb(237, 181, 130)"/><rect x="816.65" y="835.00" width="28.65" height="14.00" fill="rgb(238, 184, 128)"/><rect x="844.70" y="835.00" width="28.65" height="14.00" fill="rgb(247, 211, 107)"/><rect x="872.75" y="835.00" width="28.65" height="14.00" fill="rgb(243, 198, 118)"/><rect x="900.80" y="835.00" width="28.65" height="14.00" fill="rgb(251, 227, 88)"/><rect x="928.85" y="835.00" width="28.65" height="14.00" fill="rgb(215, 236, 109)"/><rect x="956.90" y="835.00" width="28.65" height="14.00" fill="rgb(249, 218, 100)"/><rect x="984.95" y="835.00" width="28.65" height="14.00" fill="rgb(242, 196, 121)"/><rect x="339.80" y="848.40" width="28.65" height="14.00" fill="rgb(244, 201, 117)"/><rect x="367.85" y="848.40" width="28.65" height="14.00" fill="rgb(247, 210, 109)"/><rect x="395.90" y="848.40" width="28.65" height="14.00" fill="rgb(242, 195, 121)"/><rect x="423.95" y="848.40" width="28.65" height="14.00" fill="rgb(227, 241, 95)"/><rect x="452.00" y="848.40" width="28.65" height="14.00" fill="rgb(188, 225, 138)"/><rect x="480.05" y="848.40" width="28.65" height="14.00" fill="rgb(194, 228, 132)"/><rect x="508.10" y="848.40" width="28.65" height="14.00" fill="rgb(221, 238, 102)"/><rect x="536.15" y="848.40" width="28.65" height="14.00" fill="rgb(248, 251, 67)"/><rect x="564.20" y="848.40" width="28.65" height="14.00" fill="rgb(238, 184, 128)"/><rect x="592.25" y="848.40" width="28.65" height="14.00" fill="rgb(235, 174, 135)"/><rect x="620.30" y="848.40" width="28.65" height="14.00" fill="rgb(233, 167, 142)"/><rect x="648.35" y="848.40" width="28.65" height="14.00" fill="rgb(234, 173, 136)"/><rect x="676.40" y="848.40" width="28.65" height="14.00" fill="rgb(234, 170, 138)"/><rect x="704.45" y="848.40" width="28.65" height="14.00" fill="rgb(234, 172, 137)"/><rect x="732.50" y="848.40" width="28.65" height="14.00" fill="rgb(235, 176, 134)"/><rect x="760.55" y="848.40" width="28.65" height="14.00" fill="rgb(236, 177, 133)"/><rect x="788.60" y="848.40" width="28.65" height="14.00" fill="rgb(234, 171, 138)"/><rect x="816.65" y="848.40" width="28.65" height="14.00" fill="rgb(250, 220, 97)"/><rect x="844.70" y="848.40" width="28.65" height="14.00" fill="rgb(218, 237, 105)"/><rect x="872.75" y="848.40" width="28.65" height="14.00" fill="rgb(253, 232, 80)"/><rect x="900.80" y="848.40" width="28.65" height="14.00" fill="rgb(255, 254, 59)"/><rect x="928.85" y="848.40" width="28.65" height="14.00" fill="rgb(188, 225, 138)"/><rect x="956.90" y="848.40" width="28.65" height="14.00" fill="rgb(188, 225, 138)"/><rect x="984.95" y="848.40" width="28.65" height="14.00" fill="rgb(188, 225, 138)"/><rect x="339.80" y="861.80" width="28.65" height="14.00" fill="rgb(189, 225, 137)"/><rect x="367.85" y="861.80" width="28.65" height="14.00" fill="rgb(188, 225, 138)"/><rect x="395.90" y="861.80" width="28.65" height="14.00" fill="rgb(188, 225, 138)"/><rect x="423.95" y="861.80" width="28.65" height="14.00" fill="rgb(190, 226, 136)"/><rect x="452.00" y="861.80" width="28.65" height="14.00" fill="rgb(188, 225, 138)"/><rect x="480.05" y="861.80" width="28.65" height="14.00" fill="rgb(189, 225, 137)"/><rect x="508.10" y="861.80" width="28.65" height="14.00" fill="rgb(211, 234, 114)"/><rect x="536.15" y="861.80" width="28.65" height="14.00" fill="rgb(254, 240, 70)"/><rect x="564.20" y="861.80" width="28.65" height="14.00" fill="rgb(230, 160, 150)"/><rect x="592.25" y="861.80" width="28.65" height="14.00" fill="rgb(234, 170, 138)"/><rect x="620.30" y="861.80" width="28.65" height="14.00" fill="rgb(232, 164, 145)"/><rect x="648.35" y="861.80" width="28.65" height="14.00" fill="rgb(234, 172, 137)"/><rect x="676.40" y="861.80" width="28.65" height="14.00" fill="rgb(234, 171, 137)"/><rect x="704.45" y="861.80" width="28.65" height="14.00" fill="rgb(233, 169, 139)"/><rect x="732.50" y="861.80" width="28.65" height="14.00" fill="rgb(234, 173, 136)"/><rect x="760.55" y="861.80" width="28.65" height="14.00" fill="rgb(236, 177, 133)"/><rect x="788.60" y="861.80" width="28.65" height="14.00" fill="rgb(236, 178, 132)"/><rect x="816.65" y="861.80" width="28.65" height="14.00" fill="rgb(237, 181, 130)"/><rect x="844.70" y="861.80" width="28.65" height="14.00" fill="rgb(235, 245, 84)"/><rect x="872.75" y="861.80" width="28.65" height="14.00" fill="rgb(212, 235, 113)"/><rect x="900.80" y="861.80" width="28.65" height="14.00" fill="rgb(208, 233, 118)"/><rect x="928.85" y="861.80" width="28.65" height="14.00" fill="rgb(188, 225, 138)"/><rect x="956.90" y="861.80" width="28.65" height="14.00" fill="rgb(188, 225, 138)"/><rect x="984.95" y="861.80" width="28.65" height="14.00" fill="rgb(190, 226, 136)"/><rect x="339.80" y="875.20" width="28.65" height="14.00" fill="rgb(188, 225, 138)"/><rect x="367.85" y="875.20" width="28.65" height="14.00" fill="rgb(189, 225, 137)"/><rect x="395.90" y="875.20" width="28.65" height="14.00" fill="rgb(190, 226, 136)"/><rect x="423.95" y="875.20" width="28.65" height="14.00" fill="rgb(190, 226, 136)"/><rect x="452.00" y="875.20" width="28.65" height="14.00" fill="rgb(190, 226, 136)"/><rect x="480.05" y="875.20" width="28.65" height="14.00" fill="rgb(190, 226, 136)"/><rect x="508.10" y="875.20" width="28.65" height="14.00" fill="rgb(188, 225, 138)"/><rect x="536.15" y="875.20" width="28.65" height="14.00" fill="rgb(190, 226, 136)"/><rect x="564.20" y="875.20" width="28.65" height="14.00" fill="rgb(204, 232, 122)"/><rect x="592.25" y="875.20" width="28.65" height="14.00" fill="rgb(255, 251, 61)"/><rect x="620.30" y="875.20" width="28.65" height="14.00" fill="rgb(239, 187, 127)"/><rect x="648.35" y="875.20" width="28.65" height="14.00" fill="rgb(239, 188, 126)"/><rect x="676.40" y="875.20" width="28.65" height="14.00" fill="rgb(239, 186, 127)"/><rect x="704.45" y="875.20" width="28.65" height="14.00" fill="rgb(238, 184, 129)"/><rect x="732.50" y="875.20" width="28.65" height="14.00" fill="rgb(238, 185, 128)"/><rect x="760.55" y="875.20" width="28.65" height="14.00" fill="rgb(239, 186, 127)"/><rect x="788.60" y="875.20" width="28.65" height="14.00" fill="rgb(232, 243, 88)"/><rect x="816.65" y="875.20" width="28.65" height="14.00" fill="rgb(190, 226, 136)"/><rect x="844.70" y="875.20" width="28.65" height="14.00" fill="rgb(191, 226, 135)"/><rect x="872.75" y="875.20" width="28.65" height="14.00" fill="rgb(189, 225, 137)"/><rect x="900.80" y="875.20" width="28.65" height="14.00" fill="rgb(190, 226, 136)"/><rect x="928.85" y="875.20" width="28.65" height="14.00" fill="rgb(191, 226, 135)"/><rect x="956.90" y="875.20" width="28.65" height="14.00" fill="rgb(189, 225, 137)"/><rect x="984.95" y="875.20" width="28.65" height="14.00" fill="rgb(190, 226, 136)"/><rect x="339.80" y="888.60" width="28.65" height="14.00" fill="rgb(190, 226, 136)"/><rect x="367.85" y="888.60" width="28.65" height="14.00" fill="rgb(189, 225, 137)"/><rect x="395.90" y="888.60" width="28.65" height="14.00" fill="rgb(190, 226, 136)"/><rect x="423.95" y="888.60" width="28.65" height="14.00" fill="rgb(190, 226, 136)"/><rect x="452.00" y="888.60" width="28.65" height="14.00" fill="rgb(190, 226, 136)"/><rect x="480.05" y="888.60" width="28.65" height="14.00" fill="rgb(195, 228, 131)"/><rect x="508.10" y="888.60" width="28.65" height="14.00" fill="rgb(213, 235, 111)"/><rect x="536.15" y="888.60" width="28.65" height="14.00" fill="rgb(236, 245, 83)"/><rect x="564.20" y="888.60" width="28.65" height="14.00" fill="rgb(239, 187, 127)"/><rect x="592.25" y="888.60" width="28.65" height="14.00" fill="rgb(236, 177, 133)"/><rect x="620.30" y="888.60" width="28.65" height="14.00" fill="rgb(235, 174, 135)"/><rect x="648.35" y="888.60" width="28.65" height="14.00" fill="rgb(235, 173, 136)"/><rect x="676.40" y="888.60" width="28.65" height="14.00" fill="rgb(235, 176, 134)"/><rect x="704.45" y="888.60" width="28.65" height="14.00" fill="rgb(235, 173, 136)"/><rect x="732.50" y="888.60" width="28.65" height="14.00" fill="rgb(235, 175, 135)"/><rect x="760.55" y="888.60" width="28.65" height="14.00" fill="rgb(238, 184, 129)"/><rect x="788.60" y="888.60" width="28.65" height="14.00" fill="rgb(239, 186, 128)"/><rect x="816.65" y="888.60" width="28.65" height="14.00" fill="rgb(250, 223, 93)"/><rect x="844.70" y="888.60" width="28.65" height="14.00" fill="rgb(209, 234, 116)"/><rect x="872.75" y="888.60" width="28.65" height="14.00" fill="rgb(209, 233, 117)"/><rect x="900.80" y="888.60" width="28.65" height="14.00" fill="rgb(192, 226, 134)"/><rect x="928.85" y="888.60" width="28.65" height="14.00" fill="rgb(191, 226, 135)"/><rect x="956.90" y="888.60" width="28.65" height="14.00" fill="rgb(190, 226, 136)"/><rect x="984.95" y="888.60" width="28.65" height="14.00" fill="rgb(190, 226, 136)"/><rect x="339.80" y="902.00" width="28.65" height="14.00" fill="rgb(188, 225, 138)"/><rect x="367.85" y="902.00" width="28.65" height="14.00" fill="rgb(190, 226, 136)"/><rect x="395.90" y="902.00" width="28.65" height="14.00" fill="rgb(190, 226, 136)"/><rect x="423.95" y="902.00" width="28.65" height="14.00" fill="rgb(188, 225, 138)"/><rect x="452.00" y="902.00" width="28.65" height="14.00" fill="rgb(190, 226, 136)"/><rect x="480.05" y="902.00" width="28.65" height="14.00" fill="rgb(190, 226, 136)"/><rect x="508.10" y="902.00" width="28.65" height="14.00" fill="rgb(213, 235, 112)"/><rect x="536.15" y="902.00" width="28.65" height="14.00" fill="rgb(235, 245, 84)"/><rect x="564.20" y="902.00" width="28.65" height="14.00" fill="rgb(239, 187, 127)"/><rect x="592.25" y="902.00" width="28.65" height="14.00" fill="rgb(236, 177, 133)"/><rect x="620.30" y="902.00" width="28.65" height="14.00" fill="rgb(235, 174, 135)"/><rect x="648.35" y="902.00" width="28.65" height="14.00" fill="rgb(234, 173, 136)"/><rect x="676.40" y="902.00" width="28.65" height="14.00" fill="rgb(235, 174, 135)"/><rect x="704.45" y="902.00" width="28.65" height="14.00" fill="rgb(239, 186, 127)"/><rect x="732.50" y="902.00" width="28.65" height="14.00" fill="rgb(239, 187, 127)"/><rect x="760.55" y="902.00" width="28.65" height="14.00" fill="rgb(240, 191, 124)"/><rect x="788.60" y="902.00" width="28.65" height="14.00" fill="rgb(240, 191, 125)"/><rect x="816.65" y="902.00" width="28.65" height="14.00" fill="rgb(252, 231, 82)"/><rect x="844.70" y="902.00" width="28.65" height="14.00" fill="rgb(202, 231, 124)"/><rect x="872.75" y="902.00" width="28.65" height="14.00" fill="rgb(202, 230, 124)"/><rect x="900.80" y="902.00" width="28.65" height="14.00" fill="rgb(195, 228, 131)"/><rect x="928.85" y="902.00" width="28.65" height="14.00" fill="rgb(169, 218, 148)"/><rect x="956.90" y="902.00" width="28.65" height="14.00" fill="rgb(170, 219, 148)"/><rect x="984.95" y="902.00" width="28.65" height="14.00" fill="rgb(169, 218, 148)"/><rect x="339.80" y="915.40" width="28.65" height="14.00" fill="rgb(169, 218, 148)"/><rect x="367.85" y="915.40" width="28.65" height="14.00" fill="rgb(170, 219, 148)"/><rect x="395.90" y="915.40" width="28.65" height="14.00" fill="rgb(170, 219, 148)"/><rect x="423.95" y="915.40" width="28.65" height="14.00" fill="rgb(168, 218, 148)"/><rect x="452.00" y="915.40" width="28.65" height="14.00" fill="rgb(171, 219, 148)"/><rect x="480.05" y="915.40" width="28.65" height="14.00" fill="rgb(170, 219, 148)"/><rect x="508.10" y="915.40" width="28.65" height="14.00" fill="rgb(200, 230, 126)"/><rect x="536.15" y="915.40" width="28.65" height="14.00" fill="rgb(221, 238, 102)"/><rect x="564.20" y="915.40" width="28.65" height="14.00" fill="rgb(243, 200, 118)"/><rect x="592.25" y="915.40" width="28.65" height="14.00" fill="rgb(238, 185, 128)"/><rect x="620.30" y="915.40" width="28.65" height="14.00" fill="rgb(237, 182, 130)"/><rect x="648.35" y="915.40" width="28.65" height="14.00" fill="rgb(238, 184, 128)"/><rect x="676.40" y="915.40" width="28.65" height="14.00" fill="rgb(236, 179, 131)"/><rect x="704.45" y="915.40" width="28.65" height="14.00" fill="rgb(237, 182, 130)"/><rect x="732.50" y="915.40" width="28.65" height="14.00" fill="rgb(238, 184, 129)"/><rect x="760.55" y="915.40" width="28.65" height="14.00" fill="rgb(240, 191, 125)"/><rect x="788.60" y="915.40" width="28.65" height="14.00" fill="rgb(240, 190, 125)"/><rect x="816.65" y="915.40" width="28.65" height="14.00" fill="rgb(252, 228, 86)"/><rect x="844.70" y="915.40" width="28.65" height="14.00" fill="rgb(198, 229, 128)"/><rect x="872.75" y="915.40" width="28.65" height="14.00" fill="rgb(195, 228, 131)"/><rect x="900.80" y="915.40" width="28.65" height="14.00" fill="rgb(172, 220, 147)"/><rect x="928.85" y="915.40" width="28.65" height="14.00" fill="rgb(169, 218, 148)"/><rect x="956.90" y="915.40" width="28.65" height="14.00" fill="rgb(166, 217, 148)"/><rect x="984.95" y="915.40" width="28.65" height="14.00" fill="rgb(164, 215, 149)"/><rect x="339.80" y="928.80" width="28.65" height="14.00" fill="rgb(169, 218, 148)"/><rect x="367.85" y="928.80" width="28.65" height="14.00" fill="rgb(165, 216, 149)"/><rect x="395.90" y="928.80" width="28.65" height="14.00" fill="rgb(166, 217, 148)"/><rect x="423.95" y="928.80" width="28.65" height="14.00" fill="rgb(166, 217, 148)"/><rect x="452.00" y="928.80" width="28.65" height="14.00" fill="rgb(165, 216, 149)"/><rect x="480.05" y="928.80" width="28.65" height="14.00" fill="rgb(170, 219, 148)"/><rect x="508.10" y="928.80" width="28.65" height="14.00" fill="rgb(200, 230, 126)"/><rect x="536.15" y="928.80" width="28.65" height="14.00" fill="rgb(220, 238, 103)"/><rect x="564.20" y="928.80" width="28.65" height="14.00" fill="rgb(243, 200, 118)"/><rect x="592.25" y="928.80" width="28.65" height="14.00" fill="rgb(237, 181, 130)"/><rect x="620.30" y="928.80" width="28.65" height="14.00" fill="rgb(238, 183, 129)"/><rect x="648.35" y="928.80" width="28.65" height="14.00" fill="rgb(236, 178, 132)"/><rect x="676.40" y="928.80" width="28.65" height="14.00" fill="rgb(237, 181, 130)"/><rect x="704.45" y="928.80" width="28.65" height="14.00" fill="rgb(236, 179, 131)"/><rect x="732.50" y="928.80" width="28.65" height="14.00" fill="rgb(238, 185, 128)"/><rect x="760.55" y="928.80" width="28.65" height="14.00" fill="rgb(239, 188, 126)"/><rect x="788.60" y="928.80" width="28.65" height="14.00" fill="rgb(240, 191, 125)"/><rect x="816.65" y="928.80" width="28.65" height="14.00" fill="rgb(252, 229, 85)"/><rect x="844.70" y="928.80" width="28.65" height="14.00" fill="rgb(202, 231, 124)"/><rect x="872.75" y="928.80" width="28.65" height="14.00" fill="rgb(201, 230, 125)"/><rect x="900.80" y="928.80" width="28.65" height="14.00" fill="rgb(195, 228, 131)"/><rect x="928.85" y="928.80" width="28.65" height="14.00" fill="rgb(168, 218, 148)"/><rect x="956.90" y="928.80" width="28.65" height="14.00" fill="rgb(170, 219, 148)"/><rect x="984.95" y="928.80" width="28.65" height="14.00" fill="rgb(166, 217, 148)"/><rect x="339.80" y="942.20" width="28.65" height="14.00" fill="rgb(171, 219, 148)"/><rect x="367.85" y="942.20" width="28.65" height="14.00" fill="rgb(169, 218, 148)"/><rect x="395.90" y="942.20" width="28.65" height="14.00" fill="rgb(168, 218, 148)"/><rect x="423.95" y="942.20" width="28.65" height="14.00" fill="rgb(169, 218, 148)"/><rect x="452.00" y="942.20" width="28.65" height="14.00" fill="rgb(172, 220, 147)"/><rect x="480.05" y="942.20" width="28.65" height="14.00" fill="rgb(182, 223, 142)"/><rect x="508.10" y="942.20" width="28.65" height="14.00" fill="rgb(200, 230, 126)"/><rect x="536.15" y="942.20" width="28.65" height="14.00" fill="rgb(215, 236, 109)"/><rect x="564.20" y="942.20" width="28.65" height="14.00" fill="rgb(245, 203, 115)"/><rect x="592.25" y="942.20" width="28.65" height="14.00" fill="rgb(240, 191, 124)"/><rect x="620.30" y="942.20" width="28.65" height="14.00" fill="rgb(237, 182, 130)"/><rect x="648.35" y="942.20" width="28.65" height="14.00" fill="rgb(237, 182, 129)"/><rect x="676.40" y="942.20" width="28.65" height="14.00" fill="rgb(238, 184, 128)"/><rect x="704.45" y="942.20" width="28.65" height="14.00" fill="rgb(238, 184, 129)"/><rect x="732.50" y="942.20" width="28.65" height="14.00" fill="rgb(238, 183, 129)"/><rect x="760.55" y="942.20" width="28.65" height="14.00" fill="rgb(238, 184, 128)"/><rect x="788.60" y="942.20" width="28.65" height="14.00" fill="rgb(240, 190, 125)"/><rect x="816.65" y="942.20" width="28.65" height="14.00" fill="rgb(253, 234, 78)"/><rect x="844.70" y="942.20" width="28.65" height="14.00" fill="rgb(196, 228, 130)"/><rect x="872.75" y="942.20" width="28.65" height="14.00" fill="rgb(196, 228, 130)"/><rect x="900.80" y="942.20" width="28.65" height="14.00" fill="rgb(172, 220, 147)"/><rect x="928.85" y="942.20" width="28.65" height="14.00" fill="rgb(175, 221, 145)"/><rect x="956.90" y="942.20" width="28.65" height="14.00" fill="rgb(169, 218, 148)"/><rect x="984.95" y="942.20" width="28.65" height="14.00" fill="rgb(166, 217, 148)"/><rect x="339.80" y="955.60" width="28.65" height="14.00" fill="rgb(168, 218, 148)"/><rect x="367.85" y="955.60" width="28.65" height="14.00" fill="rgb(171, 219, 148)"/><rect x="395.90" y="955.60" width="28.65" height="14.00" fill="rgb(166, 217, 148)"/><rect x="423.95" y="955.60" width="28.65" height="14.00" fill="rgb(169, 218, 148)"/><rect x="452.00" y="955.60" width="28.65" height="14.00" fill="rgb(165, 216, 149)"/><rect x="480.05" y="955.60" width="28.65" height="14.00" fill="rgb(171, 219, 148)"/><rect x="508.10" y="955.60" width="28.65" height="14.00" fill="rgb(198, 229, 128)"/><rect x="536.15" y="955.60" width="28.65" height="14.00" fill="rgb(255, 250, 62)"/><rect x="564.20" y="955.60" width="28.65" height="14.00" fill="rgb(239, 186, 128)"/><rect x="592.25" y="955.60" width="28.65" height="14.00" fill="rgb(236, 179, 132)"/><rect x="620.30" y="955.60" width="28.65" height="14.00" fill="rgb(236, 177, 133)"/><rect x="648.35" y="955.60" width="28.65" height="14.00" fill="rgb(235, 174, 135)"/><rect x="676.40" y="955.60" width="28.65" height="14.00" fill="rgb(235, 175, 135)"/><rect x="704.45" y="955.60" width="28.65" height="14.00" fill="rgb(235, 173, 136)"/><rect x="732.50" y="955.60" width="28.65" height="14.00" fill="rgb(235, 175, 135)"/><rect x="760.55" y="955.60" width="28.65" height="14.00" fill="rgb(236, 178, 132)"/><rect x="788.60" y="955.60" width="28.65" height="14.00" fill="rgb(235, 174, 135)"/><rect x="816.65" y="955.60" width="28.65" height="14.00" fill="rgb(238, 183, 129)"/><rect x="844.70" y="955.60" width="28.65" height="14.00" fill="rgb(236, 245, 83)"/><rect x="872.75" y="955.60" width="28.65" height="14.00" fill="rgb(211, 234, 114)"/><rect x="900.80" y="955.60" width="28.65" height="14.00" fill="rgb(206, 232, 120)"/><rect x="928.85" y="955.60" width="28.65" height="14.00" fill="rgb(188, 225, 138)"/><rect x="956.90" y="955.60" width="28.65" height="14.00" fill="rgb(188, 225, 138)"/><rect x="984.95" y="955.60" width="28.65" height="14.00" fill="rgb(189, 225, 137)"/><rect x="339.80" y="969.00" width="28.65" height="16.40" fill="rgb(186, 224, 139)"/><rect x="367.85" y="969.00" width="28.65" height="16.40" fill="rgb(189, 225, 137)"/><rect x="395.90" y="969.00" width="28.65" height="16.40" fill="rgb(189, 225, 137)"/><rect x="423.95" y="969.00" width="28.65" height="16.40" fill="rgb(185, 224, 140)"/><rect x="452.00" y="969.00" width="28.65" height="16.40" fill="rgb(188, 225, 138)"/><rect x="480.05" y="969.00" width="28.65" height="16.40" fill="rgb(190, 226, 136)"/><rect x="508.10" y="969.00" width="28.65" height="16.40" fill="rgb(188, 225, 138)"/><rect x="536.15" y="969.00" width="28.65" height="16.40" fill="rgb(188, 225, 138)"/><rect x="564.20" y="969.00" width="28.65" height="16.40" fill="rgb(206, 232, 120)"/><rect x="592.25" y="969.00" width="28.65" height="16.40" fill="rgb(255, 250, 62)"/><rect x="620.30" y="969.00" width="28.65" height="16.40" fill="rgb(236, 177, 133)"/><rect x="648.35" y="969.00" width="28.65" height="16.40" fill="rgb(236, 177, 133)"/><rect x="676.40" y="969.00" width="28.65" height="16.40" fill="rgb(236, 178, 132)"/><rect x="704.45" y="969.00" width="28.65" height="16.40" fill="rgb(235, 175, 134)"/><rect x="732.50" y="969.00" width="28.65" height="16.40" fill="rgb(246, 208, 111)"/><rect x="760.55" y="969.00" width="28.65" height="16.40" fill="rgb(226, 240, 96)"/><rect x="788.60" y="969.00" width="28.65" height="16.40" fill="rgb(202, 230, 124)"/><rect x="816.65" y="969.00" width="28.65" height="16.40" fill="rgb(168, 218, 148)"/><rect x="844.70" y="969.00" width="28.65" height="16.40" fill="rgb(165, 216, 149)"/><rect x="872.75" y="969.00" width="28.65" height="16.40" fill="rgb(166, 217, 148)"/><rect x="900.80" y="969.00" width="28.65" height="16.40" fill="rgb(166, 217, 148)"/><rect x="928.85" y="969.00" width="28.65" height="16.40" fill="rgb(164, 215, 149)"/><rect x="956.90" y="969.00" width="28.65" height="16.40" fill="rgb(162, 214, 149)"/><rect x="984.95" y="969.00" width="28.65" height="16.40" fill="rgb(166, 217, 148)"/></svg>
<svg style="left:0;top:0" width="1920" height="1080" viewBox="0 0 1920 1080"><text x="332" y="712.0" font-size="10" fill="#a2a2a2" text-anchor="end" font-family="Liberation Sans">Mon Jan 11</text><text x="354.8" y="712.0" font-size="9.6" letter-spacing="-0.3" fill="#111" text-anchor="middle" font-family="Liberation Sans">5.30</text><text x="382.9" y="712.0" font-size="9.6" letter-spacing="-0.3" fill="#111" text-anchor="middle" font-family="Liberation Sans">5.20</text><text x="410.9" y="712.0" font-size="9.6" letter-spacing="-0.3" fill="#111" text-anchor="middle" font-family="Liberation Sans">5.30</text><text x="439.0" y="712.0" font-size="9.6" letter-spacing="-0.3" fill="#111" text-anchor="middle" font-family="Liberation Sans">5.40</text><text x="467.0" y="712.0" font-size="9.6" letter-spacing="-0.3" fill="#111" text-anchor="middle" font-family="Liberation Sans">5.10</text><text x="495.1" y="712.0" font-size="9.6" letter-spacing="-0.3" fill="#111" text-anchor="middle" font-family="Liberation Sans">6.60</text><text x="523.1" y="712.0" font-size="9.6" letter-spacing="-0.3" fill="#111" text-anchor="middle" font-family="Liberation Sans">13.50</text><text x="551.2" y="712.0" font-size="9.6" letter-spacing="-0.3" fill="#111" text-anchor="middle" font-family="Liberation Sans">18.60</text><text x="579.2" y="712.0" font-size="9.6" letter-spacing="-0.3" fill="#111" text-anchor="middle" font-family="Liberation Sans">38.50</text><text x="607.3" y="712.0" font-size="9.6" letter-spacing="-0.3" fill="#111" text-anchor="middle" font-family="Liberation Sans">43.30</text><text x="635.3" y="712.0" font-size="9.6" letter-spacing="-0.3" fill="#111" text-anchor="middle" font-family="Liberation Sans">40.70</text><text x="663.4" y="712.0" font-size="9.6" letter-spacing="-0.3" fill="#111" text-anchor="middle" font-family="Liberation Sans">42.80</text><text x="691.4" y="712.0" font-size="9.6" letter-spacing="-0.3" fill="#111" text-anchor="middle" font-family="Liberation Sans">41.20</text><text x="719.5" y="712.0" font-size="9.6" letter-spacing="-0.3" fill="#111" text-anchor="middle" font-family="Liberation Sans">41.40</text><text x="747.5" y="712.0" font-size="9.6" letter-spacing="-0.3" fill="#111" text-anchor="middle" font-family="Liberation Sans">40.90</text><text x="775.6" y="712.0" font-size="9.6" letter-spacing="-0.3" fill="#111" text-anchor="middle" font-family="Liberation Sans">40.40</text><text x="803.6" y="712.0" font-size="9.6" letter-spacing="-0.3" fill="#111" text-anchor="middle" font-family="Liberation Sans">40.30</text><text x="831.7" y="712.0" font-size="9.6" letter-spacing="-0.3" fill="#111" text-anchor="middle" font-family="Liberation Sans">31.30</text><text x="859.7" y="712.0" font-size="9.6" letter-spacing="-0.3" fill="#111" text-anchor="middle" font-family="Liberation Sans">14.90</text><text x="887.8" y="712.0" font-size="9.6" letter-spacing="-0.3" fill="#111" text-anchor="middle" font-family="Liberation Sans">14.50</text><text x="915.8" y="712.0" font-size="9.6" letter-spacing="-0.3" fill="#111" text-anchor="middle" font-family="Liberation Sans">6.70</text><text x="943.9" y="712.0" font-size="9.6" letter-spacing="-0.3" fill="#111" text-anchor="middle" font-family="Liberation Sans">5.60</text><text x="971.9" y="712.0" font-size="9.6" letter-spacing="-0.3" fill="#111" text-anchor="middle" font-family="Liberation Sans">5.20</text><text x="1000.0" y="712.0" font-size="9.6" letter-spacing="-0.3" fill="#111" text-anchor="middle" font-family="Liberation Sans">5.20</text><text x="332" y="725.4" font-size="10" fill="#a2a2a2" text-anchor="end" font-family="Liberation Sans">Tue Jan 12</text><text x="354.8" y="725.4" font-size="9.6" letter-spacing="-0.3" fill="#111" text-anchor="middle" font-family="Liberation Sans">5.80</text><text x="382.9" y="725.4" font-size="9.6" letter-spacing="-0.3" fill="#111" text-anchor="middle" font-family="Liberation Sans">5.30</text><text x="410.9" y="725.4" font-size="9.6" letter-spacing="-0.3" fill="#111" text-anchor="middle" font-family="Liberation Sans">5.30</text><text x="439.0" y="725.4" font-size="9.6" letter-spacing="-0.3" fill="#111" text-anchor="middle" font-family="Liberation Sans">5.60</text><text x="467.0" y="725.4" font-size="9.6" letter-spacing="-0.3" fill="#111" text-anchor="middle" font-family="Liberation Sans">5.40</text><text x="495.1" y="725.4" font-size="9.6" letter-spacing="-0.3" fill="#111" text-anchor="middle" font-family="Liberation Sans">5.30</text><text x="523.1" y="725.4" font-size="9.6" letter-spacing="-0.3" fill="#111" text-anchor="middle" font-family="Liberation Sans">13.60</text><text x="551.2" y="725.4" font-size="9.6" letter-spacing="-0.3" fill="#111" text-anchor="middle" font-family="Liberation Sans">18.20</text><text x="579.2" y="725.4" font-size="9.6" letter-spacing="-0.3" fill="#111" text-anchor="middle" font-family="Liberation Sans">39.60</text><text x="607.3" y="725.4" font-size="9.6" letter-spacing="-0.3" fill="#111" text-anchor="middle" font-family="Liberation Sans">41.90</text><text x="635.3" y="725.4" font-size="9.6" letter-spacing="-0.3" fill="#111" text-anchor="middle" font-family="Liberation Sans">42.90</text><text x="663.4" y="725.4" font-size="9.6" letter-spacing="-0.3" fill="#111" text-anchor="middle" font-family="Liberation Sans">43.40</text><text x="691.4" y="725.4" font-size="9.6" letter-spacing="-0.3" fill="#111" text-anchor="middle" font-family="Liberation Sans">42.50</text><text x="719.5" y="725.4" font-size="9.6" letter-spacing="-0.3" fill="#111" text-anchor="middle" font-family="Liberation Sans">43.30</text><text x="747.5" y="725.4" font-size="9.6" letter-spacing="-0.3" fill="#111" text-anchor="middle" font-family="Liberation Sans">42.50</text><text x="775.6" y="725.4" font-size="9.6" letter-spacing="-0.3" fill="#111" text-anchor="middle" font-family="Liberation Sans">38.70</text><text x="803.6" y="725.4" font-size="9.6" letter-spacing="-0.3" fill="#111" text-anchor="middle" font-family="Liberation Sans">37.00</text><text x="831.7" y="725.4" font-size="9.6" letter-spacing="-0.3" fill="#111" text-anchor="middle" font-family="Liberation Sans">27.60</text><text x="859.7" y="725.4" font-size="9.6" letter-spacing="-0.3" fill="#111" text-anchor="middle" font-family="Liberation Sans">11.10</text><text x="887.8" y="725.4" font-size="9.6" letter-spacing="-0.3" fill="#111" text-anchor="middle" font-family="Liberation Sans">10.10</text><text x="915.8" y="725.4" font-size="9.6" letter-spacing="-0.3" fill="#111" text-anchor="middle" font-family="Liberation Sans">8.90</text><text x="943.9" y="725.4" font-size="9.6" letter-spacing="-0.3" fill="#111" text-anchor="middle" font-family="Liberation Sans">5.30</text><text x="971.9" y="725.4" font-size="9.6" letter-spacing="-0.3" fill="#111" text-anchor="middle" font-family="Liberation Sans">5.30</text><text x="1000.0" y="725.4" font-size="9.6" letter-spacing="-0.3" fill="#111" text-anchor="middle" font-family="Liberation Sans">5.30</text><text x="332" y="738.8" font-size="10" fill="#a2a2a2" text-anchor="end" font-family="Liberation Sans">Wed Jan 13</text><text x="354.8" y="738.8" font-size="9.6" letter-spacing="-0.3" fill="#111" text-anchor="middle" font-family="Liberation Sans">5.10</text><text x="382.9" y="738.8" font-size="9.6" letter-spacing="-0.3" fill="#111" text-anchor="middle" font-family="Liberation Sans">5.30</text><text x="410.9" y="738.8" font-size="9.6" letter-spacing="-0.3" fill="#111" text-anchor="middle" font-family="Liberation Sans">5.40</text><text x="439.0" y="738.8" font-size="9.6" letter-spacing="-0.3" fill="#111" text-anchor="middle" font-family="Liberation Sans">5.30</text><text x="467.0" y="738.8" font-size="9.6" letter-spacing="-0.3" fill="#111" text-anchor="middle" font-family="Liberation Sans">5.10</text><text x="495.1" y="738.8" font-size="9.6" letter-spacing="-0.3" fill="#111" text-anchor="middle" font-family="Liberation Sans">5.70</text><text x="523.1" y="738.8" font-size="9.6" letter-spacing="-0.3" fill="#111" text-anchor="middle" font-family="Liberation Sans">9.90</text><text x="551.2" y="738.8" font-size="9.6" letter-spacing="-0.3" fill="#111" text-anchor="middle" font-family="Liberation Sans">13.60</text><text x="579.2" y="738.8" font-size="9.6" letter-spacing="-0.3" fill="#111" text-anchor="middle" font-family="Liberation Sans">34.90</text><text x="607.3" y="738.8" font-size="9.6" letter-spacing="-0.3" fill="#111" text-anchor="middle" font-family="Liberation Sans">40.40</text><text x="635.3" y="738.8" font-size="9.6" letter-spacing="-0.3" fill="#111" text-anchor="middle" font-family="Liberation Sans">37.30</text><text x="663.4" y="738.8" font-size="9.6" letter-spacing="-0.3" fill="#111" text-anchor="middle" font-family="Liberation Sans">37.60</text><text x="691.4" y="738.8" font-size="9.6" letter-spacing="-0.3" fill="#111" text-anchor="middle" font-family="Liberation Sans">39.60</text><text x="719.5" y="738.8" font-size="9.6" letter-spacing="-0.3" fill="#111" text-anchor="middle" font-family="Liberation Sans">38.30</text><text x="747.5" y="738.8" font-size="9.6" letter-spacing="-0.3" fill="#111" text-anchor="middle" font-family="Liberation Sans">36.80</text><text x="775.6" y="738.8" font-size="9.6" letter-spacing="-0.3" fill="#111" text-anchor="middle" font-family="Liberation Sans">36.20</text><text x="803.6" y="738.8" font-size="9.6" letter-spacing="-0.3" fill="#111" text-anchor="middle" font-family="Liberation Sans">35.40</text><text x="831.7" y="738.8" font-size="9.6" letter-spacing="-0.3" fill="#111" text-anchor="middle" font-family="Liberation Sans">27.40</text><text x="859.7" y="738.8" font-size="9.6" letter-spacing="-0.3" fill="#111" text-anchor="middle" font-family="Liberation Sans">9.80</text><text x="887.8" y="738.8" font-size="9.6" letter-spacing="-0.3" fill="#111" text-anchor="middle" font-family="Liberation Sans">9.40</text><text x="915.8" y="738.8" font-size="9.6" letter-spacing="-0.3" fill="#111" text-anchor="middle" font-family="Liberation Sans">6.00</text><text x="943.9" y="738.8" font-size="9.6" letter-spacing="-0.3" fill="#111" text-anchor="middle" font-family="Liberation Sans">5.20</text><text x="971.9" y="738.8" font-size="9.6" letter-spacing="-0.3" fill="#111" text-anchor="middle" font-family="Liberation Sans">5.20</text><text x="1000.0" y="738.8" font-size="9.6" letter-spacing="-0.3" fill="#111" text-anchor="middle" font-family="Liberation Sans">5.30</text><text x="332" y="752.2" font-size="10" fill="#a2a2a2" text-anchor="end" font-family="Liberation Sans">Thu Jan 14</text><text x="354.8" y="752.2" font-size="9.6" letter-spacing="-0.3" fill="#111" text-anchor="middle" font-family="Liberation Sans">5.40</text><text x="382.9" y="752.2" font-size="9.6" letter-spacing="-0.3" fill="#111" text-anchor="middle" font-family="Liberation Sans">5.20</text><text x="410.9" y="752.2" font-size="9.6" letter-spacing="-0.3" fill="#111" text-anchor="middle" font-family="Liberation Sans">5.20</text><text x="439.0" y="752.2" font-size="9.6" letter-spacing="-0.3" fill="#111" text-anchor="middle" font-family="Liberation Sans">5.50</text><text x="467.0" y="752.2" font-size="9.6" letter-spacing="-0.3" fill="#111" text-anchor="middle" font-family="Liberation Sans">5.20</text><text x="495.1" y="752.2" font-size="9.6" letter-spacing="-0.3" fill="#111" text-anchor="middle" font-family="Liberation Sans">5.70</text><text x="523.1" y="752.2" font-size="9.6" letter-spacing="-0.3" fill="#111" text-anchor="middle" font-family="Liberation Sans">10.30</text><text x="551.2" y="752.2" font-size="9.6" letter-spacing="-0.3" fill="#111" text-anchor="middle" font-family="Liberation Sans">13.10</text><text x="579.2" y="752.2" font-size="9.6" letter-spacing="-0.3" fill="#111" text-anchor="middle" font-family="Liberation Sans">33.20</text><text x="607.3" y="752.2" font-size="9.6" letter-spacing="-0.3" fill="#111" text-anchor="middle" font-family="Liberation Sans">35.90</text><text x="635.3" y="752.2" font-size="9.6" letter-spacing="-0.3" fill="#111" text-anchor="middle" font-family="Liberation Sans">36.60</text><text x="663.4" y="752.2" font-size="9.6" letter-spacing="-0.3" fill="#111" text-anchor="middle" font-family="Liberation Sans">37.20</text><text x="691.4" y="752.2" font-size="9.6" letter-spacing="-0.3" fill="#111" text-anchor="middle" font-family="Liberation Sans">36.80</text><text x="719.5" y="752.2" font-size="9.6" letter-spacing="-0.3" fill="#111" text-anchor="middle" font-family="Liberation Sans">36.60</text><text x="747.5" y="752.2" font-size="9.6" letter-spacing="-0.3" fill="#111" text-anchor="middle" font-family="Liberation Sans">36.70</text><text x="775.6" y="752.2" font-size="9.6" letter-spacing="-0.3" fill="#111" text-anchor="middle" font-family="Liberation Sans">35.10</text><text x="803.6" y="752.2" font-size="9.6" letter-spacing="-0.3" fill="#111" text-anchor="middle" font-family="Liberation Sans">35.20</text><text x="831.7" y="752.2" font-size="9.6" letter-spacing="-0.3" fill="#111" text-anchor="middle" font-family="Liberation Sans">27.20</text><text x="859.7" y="752.2" font-size="9.6" letter-spacing="-0.3" fill="#111" text-anchor="middle" font-family="Liberation Sans">10.80</text><text x="887.8" y="752.2" font-size="9.6" letter-spacing="-0.3" fill="#111" text-anchor="middle" font-family="Liberation Sans">10.20</text><text x="915.8" y="752.2" font-size="9.6" letter-spacing="-0.3" fill="#111" text-anchor="middle" font-family="Liberation Sans">9.10</text><text x="943.9" y="752.2" font-size="9.6" letter-spacing="-0.3" fill="#111" text-anchor="middle" font-family="Liberation Sans">5.30</text><text x="971.9" y="752.2" font-size="9.6" letter-spacing="-0.3" fill="#111" text-anchor="middle" font-family="Liberation Sans">5.50</text><text x="1000.0" y="752.2" font-size="9.6" letter-spacing="-0.3" fill="#111" text-anchor="middle" font-family="Liberation Sans">5.50</text><text x="332" y="765.6" font-size="10" fill="#a2a2a2" text-anchor="end" font-family="Liberation Sans">Fri Jan 15</text><text x="354.8" y="765.6" font-size="9.6" letter-spacing="-0.3" fill="#111" text-anchor="middle" font-family="Liberation Sans">5.40</text><text x="382.9" y="765.6" font-size="9.6" letter-spacing="-0.3" fill="#111" text-anchor="middle" font-family="Liberation Sans">5.20</text><text x="410.9" y="765.6" font-size="9.6" letter-spacing="-0.3" fill="#111" text-anchor="middle" font-family="Liberation Sans">5.30</text><text x="439.0" y="765.6" font-size="9.6" letter-spacing="-0.3" fill="#111" text-anchor="middle" font-family="Liberation Sans">5.10</text><text x="467.0" y="765.6" font-size="9.6" letter-spacing="-0.3" fill="#111" text-anchor="middle" font-family="Liberation Sans">5.60</text><text x="495.1" y="765.6" font-size="9.6" letter-spacing="-0.3" fill="#111" text-anchor="middle" font-family="Liberation Sans">6.40</text><text x="523.1" y="765.6" font-size="9.6" letter-spacing="-0.3" fill="#111" text-anchor="middle" font-family="Liberation Sans">11.30</text><text x="551.2" y="765.6" font-size="9.6" letter-spacing="-0.3" fill="#111" text-anchor="middle" font-family="Liberation Sans">17.60</text><text x="579.2" y="765.6" font-size="9.6" letter-spacing="-0.3" fill="#111" text-anchor="middle" font-family="Liberation Sans">36.20</text><text x="607.3" y="765.6" font-size="9.6" letter-spacing="-0.3" fill="#111" text-anchor="middle" font-family="Liberation Sans">39.00</text><text x="635.3" y="765.6" font-size="9.6" letter-spacing="-0.3" fill="#111" text-anchor="middle" font-family="Liberation Sans">37.80</text><text x="663.4" y="765.6" font-size="9.6" letter-spacing="-0.3" fill="#111" text-anchor="middle" font-family="Liberation Sans">37.80</text><text x="691.4" y="765.6" font-size="9.6" letter-spacing="-0.3" fill="#111" text-anchor="middle" font-family="Liberation Sans">38.70</text><text x="719.5" y="765.6" font-size="9.6" letter-spacing="-0.3" fill="#111" text-anchor="middle" font-family="Liberation Sans">35.60</text><text x="747.5" y="765.6" font-size="9.6" letter-spacing="-0.3" fill="#111" text-anchor="middle" font-family="Liberation Sans">35.80</text><text x="775.6" y="765.6" font-size="9.6" letter-spacing="-0.3" fill="#111" text-anchor="middle" font-family="Liberation Sans">35.50</text><text x="803.6" y="765.6" font-size="9.6" letter-spacing="-0.3" fill="#111" text-anchor="middle" font-family="Liberation Sans">34.40</text><text x="831.7" y="765.6" font-size="9.6" letter-spacing="-0.3" fill="#111" text-anchor="middle" font-family="Liberation Sans">25.80</text><text x="859.7" y="765.6" font-size="9.6" letter-spacing="-0.3" fill="#111" text-anchor="middle" font-family="Liberation Sans">9.80</text><text x="887.8" y="765.6" font-size="9.6" letter-spacing="-0.3" fill="#111" text-anchor="middle" font-family="Liberation Sans">9.40</text><text x="915.8" y="765.6" font-size="9.6" letter-spacing="-0.3" fill="#111" text-anchor="middle" font-family="Liberation Sans">5.90</text><text x="943.9" y="765.6" font-size="9.6" letter-spacing="-0.3" fill="#111" text-anchor="middle" font-family="Liberation Sans">5.50</text><text x="971.9" y="765.6" font-size="9.6" letter-spacing="-0.3" fill="#111" text-anchor="middle" font-family="Liberation Sans">5.30</text><text x="1000.0" y="765.6" font-size="9.6" letter-spacing="-0.3" fill="#111" text-anchor="middle" font-family="Liberation Sans">5.30</text><text x="332" y="779.0" font-size="10" fill="#a2a2a2" text-anchor="end" font-family="Liberation Sans">Sat Jan 16</text><text x="354.8" y="779.0" font-size="9.6" letter-spacing="-0.3" fill="#111" text-anchor="middle" font-family="Liberation Sans">5.50</text><text x="382.9" y="779.0" font-size="9.6" letter-spacing="-0.3" fill="#111" text-anchor="middle" font-family="Liberation Sans">5.20</text><text x="410.9" y="779.0" font-size="9.6" letter-spacing="-0.3" fill="#111" text-anchor="middle" font-family="Liberation Sans">5.40</text><text x="439.0" y="779.0" font-size="9.6" letter-spacing="-0.3" fill="#111" text-anchor="middle" font-family="Liberation Sans">5.30</text><text x="467.0" y="779.0" font-size="9.6" letter-spacing="-0.3" fill="#111" text-anchor="middle" font-family="Liberation Sans">5.30</text><text x="495.1" y="779.0" font-size="9.6" letter-spacing="-0.3" fill="#111" text-anchor="middle" font-family="Liberation Sans">5.30</text><text x="523.1" y="779.0" font-size="9.6" letter-spacing="-0.3" fill="#111" text-anchor="middle" font-family="Liberation Sans">10.20</text><text x="551.2" y="779.0" font-size="9.6" letter-spacing="-0.3" fill="#111" text-anchor="middle" font-family="Liberation Sans">23.10</text><text x="579.2" y="779.0" font-size="9.6" letter-spacing="-0.3" fill="#111" text-anchor="middle" font-family="Liberation Sans">41.80</text><text x="607.3" y="779.0" font-size="9.6" letter-spacing="-0.3" fill="#111" text-anchor="middle" font-family="Liberation Sans">40.70</text><text x="635.3" y="779.0" font-size="9.6" letter-spacing="-0.3" fill="#111" text-anchor="middle" font-family="Liberation Sans">39.70</text><text x="663.4" y="779.0" font-size="9.6" letter-spacing="-0.3" fill="#111" text-anchor="middle" font-family="Liberation Sans">40.30</text><text x="691.4" y="779.0" font-size="9.6" letter-spacing="-0.3" fill="#111" text-anchor="middle" font-family="Liberation Sans">40.70</text><text x="719.5" y="779.0" font-size="9.6" letter-spacing="-0.3" fill="#111" text-anchor="middle" font-family="Liberation Sans">40.10</text><text x="747.5" y="779.0" font-size="9.6" letter-spacing="-0.3" fill="#111" text-anchor="middle" font-family="Liberation Sans">40.40</text><text x="775.6" y="779.0" font-size="9.6" letter-spacing="-0.3" fill="#111" text-anchor="middle" font-family="Liberation Sans">40.50</text><text x="803.6" y="779.0" font-size="9.6" letter-spacing="-0.3" fill="#111" text-anchor="middle" font-family="Liberation Sans">40.50</text><text x="831.7" y="779.0" font-size="9.6" letter-spacing="-0.3" fill="#111" text-anchor="middle" font-family="Liberation Sans">39.50</text><text x="859.7" y="779.0" font-size="9.6" letter-spacing="-0.3" fill="#111" text-anchor="middle" font-family="Liberation Sans">19.40</text><text x="887.8" y="779.0" font-size="9.6" letter-spacing="-0.3" fill="#111" text-anchor="middle" font-family="Liberation Sans">15.00</text><text x="915.8" y="779.0" font-size="9.6" letter-spacing="-0.3" fill="#111" text-anchor="middle" font-family="Liberation Sans">13.50</text><text x="943.9" y="779.0" font-size="9.6" letter-spacing="-0.3" fill="#111" text-anchor="middle" font-family="Liberation Sans">5.00</text><text x="971.9" y="779.0" font-size="9.6" letter-spacing="-0.3" fill="#111" text-anchor="middle" font-family="Liberation Sans">5.20</text><text x="1000.0" y="779.0" font-size="9.6" letter-spacing="-0.3" fill="#111" text-anchor="middle" font-family="Liberation Sans">5.40</text><text x="332" y="792.3" font-size="10" fill="#a2a2a2" text-anchor="end" font-family="Liberation Sans">Sun Jan 17</text><text x="354.8" y="792.3" font-size="9.6" letter-spacing="-0.3" fill="#111" text-anchor="middle" font-family="Liberation Sans">5.10</text><text x="382.9" y="792.3" font-size="9.6" letter-spacing="-0.3" fill="#111" text-anchor="middle" font-family="Liberation Sans">5.30</text><text x="410.9" y="792.3" font-size="9.6" letter-spacing="-0.3" fill="#111" text-anchor="middle" font-family="Liberation Sans">5.30</text><text x="439.0" y="792.3" font-size="9.6" letter-spacing="-0.3" fill="#111" text-anchor="middle" font-family="Liberation Sans">5.10</text><text x="467.0" y="792.3" font-size="9.6" letter-spacing="-0.3" fill="#111" text-anchor="middle" font-family="Liberation Sans">5.20</text><text x="495.1" y="792.3" font-size="9.6" letter-spacing="-0.3" fill="#111" text-anchor="middle" font-family="Liberation Sans">5.20</text><text x="523.1" y="792.3" font-size="9.6" letter-spacing="-0.3" fill="#111" text-anchor="middle" font-family="Liberation Sans">5.20</text><text x="551.2" y="792.3" font-size="9.6" letter-spacing="-0.3" fill="#111" text-anchor="middle" font-family="Liberation Sans">5.30</text><text x="579.2" y="792.3" font-size="9.6" letter-spacing="-0.3" fill="#111" text-anchor="middle" font-family="Liberation Sans">11.80</text><text x="607.3" y="792.3" font-size="9.6" letter-spacing="-0.3" fill="#111" text-anchor="middle" font-family="Liberation Sans">23.60</text><text x="635.3" y="792.3" font-size="9.6" letter-spacing="-0.3" fill="#111" text-anchor="middle" font-family="Liberation Sans">37.80</text><text x="663.4" y="792.3" font-size="9.6" letter-spacing="-0.3" fill="#111" text-anchor="middle" font-family="Liberation Sans">38.00</text><text x="691.4" y="792.3" font-size="9.6" letter-spacing="-0.3" fill="#111" text-anchor="middle" font-family="Liberation Sans">38.80</text><text x="719.5" y="792.3" font-size="9.6" letter-spacing="-0.3" fill="#111" text-anchor="middle" font-family="Liberation Sans">38.70</text><text x="747.5" y="792.3" font-size="9.6" letter-spacing="-0.3" fill="#111" text-anchor="middle" font-family="Liberation Sans">38.30</text><text x="775.6" y="792.3" font-size="9.6" letter-spacing="-0.3" fill="#111" text-anchor="middle" font-family="Liberation Sans">37.70</text><text x="803.6" y="792.3" font-size="9.6" letter-spacing="-0.3" fill="#111" text-anchor="middle" font-family="Liberation Sans">17.70</text><text x="831.7" y="792.3" font-size="9.6" letter-spacing="-0.3" fill="#111" text-anchor="middle" font-family="Liberation Sans">5.40</text><text x="859.7" y="792.3" font-size="9.6" letter-spacing="-0.3" fill="#111" text-anchor="middle" font-family="Liberation Sans">5.30</text><text x="887.8" y="792.3" font-size="9.6" letter-spacing="-0.3" fill="#111" text-anchor="middle" font-family="Liberation Sans">5.40</text><text x="915.8" y="792.3" font-size="9.6" letter-spacing="-0.3" fill="#111" text-anchor="middle" font-family="Liberation Sans">5.30</text><text x="943.9" y="792.3" font-size="9.6" letter-spacing="-0.3" fill="#111" text-anchor="middle" font-family="Liberation Sans">5.20</text><text x="971.9" y="792.3" font-size="9.6" letter-spacing="-0.3" fill="#111" text-anchor="middle" font-family="Liberation Sans">5.40</text><text x="1000.0" y="792.3" font-size="9.6" letter-spacing="-0.3" fill="#111" text-anchor="middle" font-family="Liberation Sans">5.40</text><text x="332" y="805.7" font-size="10" fill="#a2a2a2" text-anchor="end" font-family="Liberation Sans">Mon Jan 18</text><text x="354.8" y="805.7" font-size="9.6" letter-spacing="-0.3" fill="#111" text-anchor="middle" font-family="Liberation Sans">5.10</text><text x="382.9" y="805.7" font-size="9.6" letter-spacing="-0.3" fill="#111" text-anchor="middle" font-family="Liberation Sans">5.50</text><text x="410.9" y="805.7" font-size="9.6" letter-spacing="-0.3" fill="#111" text-anchor="middle" font-family="Liberation Sans">5.30</text><text x="439.0" y="805.7" font-size="9.6" letter-spacing="-0.3" fill="#111" text-anchor="middle" font-family="Liberation Sans">5.20</text><text x="467.0" y="805.7" font-size="9.6" letter-spacing="-0.3" fill="#111" text-anchor="middle" font-family="Liberation Sans">5.90</text><text x="495.1" y="805.7" font-size="9.6" letter-spacing="-0.3" fill="#111" text-anchor="middle" font-family="Liberation Sans">6.30</text><text x="523.1" y="805.7" font-size="9.6" letter-spacing="-0.3" fill="#111" text-anchor="middle" font-family="Liberation Sans">13.40</text><text x="551.2" y="805.7" font-size="9.6" letter-spacing="-0.3" fill="#111" text-anchor="middle" font-family="Liberation Sans">18.50</text><text x="579.2" y="805.7" font-size="9.6" letter-spacing="-0.3" fill="#111" text-anchor="middle" font-family="Liberation Sans">38.30</text><text x="607.3" y="805.7" font-size="9.6" letter-spacing="-0.3" fill="#111" text-anchor="middle" font-family="Liberation Sans">44.10</text><text x="635.3" y="805.7" font-size="9.6" letter-spacing="-0.3" fill="#111" text-anchor="middle" font-family="Liberation Sans">42.40</text><text x="663.4" y="805.7" font-size="9.6" letter-spacing="-0.3" fill="#111" text-anchor="middle" font-family="Liberation Sans">42.40</text><text x="691.4" y="805.7" font-size="9.6" letter-spacing="-0.3" fill="#111" text-anchor="middle" font-family="Liberation Sans">43.90</text><text x="719.5" y="805.7" font-size="9.6" letter-spacing="-0.3" fill="#111" text-anchor="middle" font-family="Liberation Sans">45.00</text><text x="747.5" y="805.7" font-size="9.6" letter-spacing="-0.3" fill="#111" text-anchor="middle" font-family="Liberation Sans">40.70</text><text x="775.6" y="805.7" font-size="9.6" letter-spacing="-0.3" fill="#111" text-anchor="middle" font-family="Liberation Sans">38.90</text><text x="803.6" y="805.7" font-size="9.6" letter-spacing="-0.3" fill="#111" text-anchor="middle" font-family="Liberation Sans">37.90</text><text x="831.7" y="805.7" font-size="9.6" letter-spacing="-0.3" fill="#111" text-anchor="middle" font-family="Liberation Sans">30.30</text><text x="859.7" y="805.7" font-size="9.6" letter-spacing="-0.3" fill="#111" text-anchor="middle" font-family="Liberation Sans">14.40</text><text x="887.8" y="805.7" font-size="9.6" letter-spacing="-0.3" fill="#111" text-anchor="middle" font-family="Liberation Sans">14.30</text><text x="915.8" y="805.7" font-size="9.6" letter-spacing="-0.3" fill="#111" text-anchor="middle" font-family="Liberation Sans">6.70</text><text x="943.9" y="805.7" font-size="9.6" letter-spacing="-0.3" fill="#111" text-anchor="middle" font-family="Liberation Sans">5.40</text><text x="971.9" y="805.7" font-size="9.6" letter-spacing="-0.3" fill="#111" text-anchor="middle" font-family="Liberation Sans">5.30</text><text x="1000.0" y="805.7" font-size="9.6" letter-spacing="-0.3" fill="#111" text-anchor="middle" font-family="Liberation Sans">5.40</text><text x="332" y="819.1" font-size="10" fill="#a2a2a2" text-anchor="end" font-family="Liberation Sans">Tue Jan 19</text><text x="354.8" y="819.1" font-size="9.6" letter-spacing="-0.3" fill="#111" text-anchor="middle" font-family="Liberation Sans">5.40</text><text x="382.9" y="819.1" font-size="9.6" letter-spacing="-0.3" fill="#111" text-anchor="middle" font-family="Liberation Sans">5.30</text><text x="410.9" y="819.1" font-size="9.6" letter-spacing="-0.3" fill="#111" text-anchor="middle" font-family="Liberation Sans">5.40</text><text x="439.0" y="819.1" font-size="9.6" letter-spacing="-0.3" fill="#111" text-anchor="middle" font-family="Liberation Sans">5.30</text><text x="467.0" y="819.1" font-size="9.6" letter-spacing="-0.3" fill="#111" text-anchor="middle" font-family="Liberation Sans">5.60</text><text x="495.1" y="819.1" font-size="9.6" letter-spacing="-0.3" fill="#111" text-anchor="middle" font-family="Liberation Sans">5.40</text><text x="523.1" y="819.1" font-size="9.6" letter-spacing="-0.3" fill="#111" text-anchor="middle" font-family="Liberation Sans">13.70</text><text x="551.2" y="819.1" font-size="9.6" letter-spacing="-0.3" fill="#111" text-anchor="middle" font-family="Liberation Sans">18.60</text><text x="579.2" y="819.1" font-size="9.6" letter-spacing="-0.3" fill="#111" text-anchor="middle" font-family="Liberation Sans">37.50</text><text x="607.3" y="819.1" font-size="9.6" letter-spacing="-0.3" fill="#111" text-anchor="middle" font-family="Liberation Sans">43.40</text><text x="635.3" y="819.1" font-size="9.6" letter-spacing="-0.3" fill="#111" text-anchor="middle" font-family="Liberation Sans">42.10</text><text x="663.4" y="819.1" font-size="9.6" letter-spacing="-0.3" fill="#111" text-anchor="middle" font-family="Liberation Sans">41.40</text><text x="691.4" y="819.1" font-size="9.6" letter-spacing="-0.3" fill="#111" text-anchor="middle" font-family="Liberation Sans">41.50</text><text x="719.5" y="819.1" font-size="9.6" letter-spacing="-0.3" fill="#111" text-anchor="middle" font-family="Liberation Sans">44.60</text><text x="747.5" y="819.1" font-size="9.6" letter-spacing="-0.3" fill="#111" text-anchor="middle" font-family="Liberation Sans">44.20</text><text x="775.6" y="819.1" font-size="9.6" letter-spacing="-0.3" fill="#111" text-anchor="middle" font-family="Liberation Sans">43.80</text><text x="803.6" y="819.1" font-size="9.6" letter-spacing="-0.3" fill="#111" text-anchor="middle" font-family="Liberation Sans">41.60</text><text x="831.7" y="819.1" font-size="9.6" letter-spacing="-0.3" fill="#111" text-anchor="middle" font-family="Liberation Sans">34.00</text><text x="859.7" y="819.1" font-size="9.6" letter-spacing="-0.3" fill="#111" text-anchor="middle" font-family="Liberation Sans">18.20</text><text x="887.8" y="819.1" font-size="9.6" letter-spacing="-0.3" fill="#111" text-anchor="middle" font-family="Liberation Sans">17.50</text><text x="915.8" y="819.1" font-size="9.6" letter-spacing="-0.3" fill="#111" text-anchor="middle" font-family="Liberation Sans">15.70</text><text x="943.9" y="819.1" font-size="9.6" letter-spacing="-0.3" fill="#111" text-anchor="middle" font-family="Liberation Sans">7.80</text><text x="971.9" y="819.1" font-size="9.6" letter-spacing="-0.3" fill="#111" text-anchor="middle" font-family="Liberation Sans">7.50</text><text x="1000.0" y="819.1" font-size="9.6" letter-spacing="-0.3" fill="#111" text-anchor="middle" font-family="Liberation Sans">7.50</text><text x="332" y="832.5" font-size="10" fill="#a2a2a2" text-anchor="end" font-family="Liberation Sans">Wed Jan 20</text><text x="354.8" y="832.5" font-size="9.6" letter-spacing="-0.3" fill="#111" text-anchor="middle" font-family="Liberation Sans">7.60</text><text x="382.9" y="832.5" font-size="9.6" letter-spacing="-0.3" fill="#111" text-anchor="middle" font-family="Liberation Sans">7.70</text><text x="410.9" y="832.5" font-size="9.6" letter-spacing="-0.3" fill="#111" text-anchor="middle" font-family="Liberation Sans">7.40</text><text x="439.0" y="832.5" font-size="9.6" letter-spacing="-0.3" fill="#111" text-anchor="middle" font-family="Liberation Sans">7.60</text><text x="467.0" y="832.5" font-size="9.6" letter-spacing="-0.3" fill="#111" text-anchor="middle" font-family="Liberation Sans">7.60</text><text x="495.1" y="832.5" font-size="9.6" letter-spacing="-0.3" fill="#111" text-anchor="middle" font-family="Liberation Sans">7.30</text><text x="523.1" y="832.5" font-size="9.6" letter-spacing="-0.3" fill="#111" text-anchor="middle" font-family="Liberation Sans">16.90</text><text x="551.2" y="832.5" font-size="9.6" letter-spacing="-0.3" fill="#111" text-anchor="middle" font-family="Liberation Sans">21.40</text><text x="579.2" y="832.5" font-size="9.6" letter-spacing="-0.3" fill="#111" text-anchor="middle" font-family="Liberation Sans">39.10</text><text x="607.3" y="832.5" font-size="9.6" letter-spacing="-0.3" fill="#111" text-anchor="middle" font-family="Liberation Sans">43.70</text><text x="635.3" y="832.5" font-size="9.6" letter-spacing="-0.3" fill="#111" text-anchor="middle" font-family="Liberation Sans">43.30</text><text x="663.4" y="832.5" font-size="9.6" letter-spacing="-0.3" fill="#111" text-anchor="middle" font-family="Liberation Sans">43.10</text><text x="691.4" y="832.5" font-size="9.6" letter-spacing="-0.3" fill="#111" text-anchor="middle" font-family="Liberation Sans">43.10</text><text x="719.5" y="832.5" font-size="9.6" letter-spacing="-0.3" fill="#111" text-anchor="middle" font-family="Liberation Sans">41.40</text><text x="747.5" y="832.5" font-size="9.6" letter-spacing="-0.3" fill="#111" text-anchor="middle" font-family="Liberation Sans">40.90</text><text x="775.6" y="832.5" font-size="9.6" letter-spacing="-0.3" fill="#111" text-anchor="middle" font-family="Liberation Sans">41.10</text><text x="803.6" y="832.5" font-size="9.6" letter-spacing="-0.3" fill="#111" text-anchor="middle" font-family="Liberation Sans">39.30</text><text x="831.7" y="832.5" font-size="9.6" letter-spacing="-0.3" fill="#111" text-anchor="middle" font-family="Liberation Sans">31.80</text><text x="859.7" y="832.5" font-size="9.6" letter-spacing="-0.3" fill="#111" text-anchor="middle" font-family="Liberation Sans">14.60</text><text x="887.8" y="832.5" font-size="9.6" letter-spacing="-0.3" fill="#111" text-anchor="middle" font-family="Liberation Sans">13.80</text><text x="915.8" y="832.5" font-size="9.6" letter-spacing="-0.3" fill="#111" text-anchor="middle" font-family="Liberation Sans">8.60</text><text x="943.9" y="832.5" font-size="9.6" letter-spacing="-0.3" fill="#111" text-anchor="middle" font-family="Liberation Sans">7.60</text><text x="971.9" y="832.5" font-size="9.6" letter-spacing="-0.3" fill="#111" text-anchor="middle" font-family="Liberation Sans">7.50</text><text x="1000.0" y="832.5" font-size="9.6" letter-spacing="-0.3" fill="#111" text-anchor="middle" font-family="Liberation Sans">7.40</text><text x="332" y="845.9" font-size="10" fill="#a2a2a2" text-anchor="end" font-family="Liberation Sans">Thu Jan 21</text><text x="354.8" y="845.9" font-size="9.6" letter-spacing="-0.3" fill="#111" text-anchor="middle" font-family="Liberation Sans">7.50</text><text x="382.9" y="845.9" font-size="9.6" letter-spacing="-0.3" fill="#111" text-anchor="middle" font-family="Liberation Sans">7.50</text><text x="410.9" y="845.9" font-size="9.6" letter-spacing="-0.3" fill="#111" text-anchor="middle" font-family="Liberation Sans">7.50</text><text x="439.0" y="845.9" font-size="9.6" letter-spacing="-0.3" fill="#111" text-anchor="middle" font-family="Liberation Sans">7.60</text><text x="467.0" y="845.9" font-size="9.6" letter-spacing="-0.3" fill="#111" text-anchor="middle" font-family="Liberation Sans">7.70</text><text x="495.1" y="845.9" font-size="9.6" letter-spacing="-0.3" fill="#111" text-anchor="middle" font-family="Liberation Sans">7.40</text><text x="523.1" y="845.9" font-size="9.6" letter-spacing="-0.3" fill="#111" text-anchor="middle" font-family="Liberation Sans">14.10</text><text x="551.2" y="845.9" font-size="9.6" letter-spacing="-0.3" fill="#111" text-anchor="middle" font-family="Liberation Sans">17.80</text><text x="579.2" y="845.9" font-size="9.6" letter-spacing="-0.3" fill="#111" text-anchor="middle" font-family="Liberation Sans">37.60</text><text x="607.3" y="845.9" font-size="9.6" letter-spacing="-0.3" fill="#111" text-anchor="middle" font-family="Liberation Sans">39.60</text><text x="635.3" y="845.9" font-size="9.6" letter-spacing="-0.3" fill="#111" text-anchor="middle" font-family="Liberation Sans">40.50</text><text x="663.4" y="845.9" font-size="9.6" letter-spacing="-0.3" fill="#111" text-anchor="middle" font-family="Liberation Sans">40.80</text><text x="691.4" y="845.9" font-size="9.6" letter-spacing="-0.3" fill="#111" text-anchor="middle" font-family="Liberation Sans">40.60</text><text x="719.5" y="845.9" font-size="9.6" letter-spacing="-0.3" fill="#111" text-anchor="middle" font-family="Liberation Sans">40.30</text><text x="747.5" y="845.9" font-size="9.6" letter-spacing="-0.3" fill="#111" text-anchor="middle" font-family="Liberation Sans">41.40</text><text x="775.6" y="845.9" font-size="9.6" letter-spacing="-0.3" fill="#111" text-anchor="middle" font-family="Liberation Sans">38.80</text><text x="803.6" y="845.9" font-size="9.6" letter-spacing="-0.3" fill="#111" text-anchor="middle" font-family="Liberation Sans">39.30</text><text x="831.7" y="845.9" font-size="9.6" letter-spacing="-0.3" fill="#111" text-anchor="middle" font-family="Liberation Sans">38.50</text><text x="859.7" y="845.9" font-size="9.6" letter-spacing="-0.3" fill="#111" text-anchor="middle" font-family="Liberation Sans">33.20</text><text x="887.8" y="845.9" font-size="9.6" letter-spacing="-0.3" fill="#111" text-anchor="middle" font-family="Liberation Sans">35.50</text><text x="915.8" y="845.9" font-size="9.6" letter-spacing="-0.3" fill="#111" text-anchor="middle" font-family="Liberation Sans">29.70</text><text x="943.9" y="845.9" font-size="9.6" letter-spacing="-0.3" fill="#111" text-anchor="middle" font-family="Liberation Sans">15.20</text><text x="971.9" y="845.9" font-size="9.6" letter-spacing="-0.3" fill="#111" text-anchor="middle" font-family="Liberation Sans">31.80</text><text x="1000.0" y="845.9" font-size="9.6" letter-spacing="-0.3" fill="#111" text-anchor="middle" font-family="Liberation Sans">36.00</text><text x="332" y="859.3" font-size="10" fill="#a2a2a2" text-anchor="end" font-family="Liberation Sans">Fri Jan 22</text><text x="354.8" y="859.3" font-size="9.6" letter-spacing="-0.3" fill="#111" text-anchor="middle" font-family="Liberation Sans">35.10</text><text x="382.9" y="859.3" font-size="9.6" letter-spacing="-0.3" fill="#111" text-anchor="middle" font-family="Liberation Sans">33.50</text><text x="410.9" y="859.3" font-size="9.6" letter-spacing="-0.3" fill="#111" text-anchor="middle" font-family="Liberation Sans">36.10</text><text x="439.0" y="859.3" font-size="9.6" letter-spacing="-0.3" fill="#111" text-anchor="middle" font-family="Liberation Sans">17.10</text><text x="467.0" y="859.3" font-size="9.6" letter-spacing="-0.3" fill="#111" text-anchor="middle" font-family="Liberation Sans">10.10</text><text x="495.1" y="859.3" font-size="9.6" letter-spacing="-0.3" fill="#111" text-anchor="middle" font-family="Liberation Sans">11.30</text><text x="523.1" y="859.3" font-size="9.6" letter-spacing="-0.3" fill="#111" text-anchor="middle" font-family="Liberation Sans">16.10</text><text x="551.2" y="859.3" font-size="9.6" letter-spacing="-0.3" fill="#111" text-anchor="middle" font-family="Liberation Sans">21.50</text><text x="579.2" y="859.3" font-size="9.6" letter-spacing="-0.3" fill="#111" text-anchor="middle" font-family="Liberation Sans">38.50</text><text x="607.3" y="859.3" font-size="9.6" letter-spacing="-0.3" fill="#111" text-anchor="middle" font-family="Liberation Sans">41.30</text><text x="635.3" y="859.3" font-size="9.6" letter-spacing="-0.3" fill="#111" text-anchor="middle" font-family="Liberation Sans">43.30</text><text x="663.4" y="859.3" font-size="9.6" letter-spacing="-0.3" fill="#111" text-anchor="middle" font-family="Liberation Sans">41.60</text><text x="691.4" y="859.3" font-size="9.6" letter-spacing="-0.3" fill="#111" text-anchor="middle" font-family="Liberation Sans">42.40</text><text x="719.5" y="859.3" font-size="9.6" letter-spacing="-0.3" fill="#111" text-anchor="middle" font-family="Liberation Sans">41.90</text><text x="747.5" y="859.3" font-size="9.6" letter-spacing="-0.3" fill="#111" text-anchor="middle" font-family="Liberation Sans">40.60</text><text x="775.6" y="859.3" font-size="9.6" letter-spacing="-0.3" fill="#111" text-anchor="middle" font-family="Liberation Sans">40.40</text><text x="803.6" y="859.3" font-size="9.6" letter-spacing="-0.3" fill="#111" text-anchor="middle" font-family="Liberation Sans">42.10</text><text x="831.7" y="859.3" font-size="9.6" letter-spacing="-0.3" fill="#111" text-anchor="middle" font-family="Liberation Sans">31.30</text><text x="859.7" y="859.3" font-size="9.6" letter-spacing="-0.3" fill="#111" text-anchor="middle" font-family="Liberation Sans">15.70</text><text x="887.8" y="859.3" font-size="9.6" letter-spacing="-0.3" fill="#111" text-anchor="middle" font-family="Liberation Sans">28.40</text><text x="915.8" y="859.3" font-size="9.6" letter-spacing="-0.3" fill="#111" text-anchor="middle" font-family="Liberation Sans">23.30</text><text x="943.9" y="859.3" font-size="9.6" letter-spacing="-0.3" fill="#111" text-anchor="middle" font-family="Liberation Sans">10.10</text><text x="971.9" y="859.3" font-size="9.6" letter-spacing="-0.3" fill="#111" text-anchor="middle" font-family="Liberation Sans">10.10</text><text x="1000.0" y="859.3" font-size="9.6" letter-spacing="-0.3" fill="#111" text-anchor="middle" font-family="Liberation Sans">10.00</text><text x="332" y="872.7" font-size="10" fill="#a2a2a2" text-anchor="end" font-family="Liberation Sans">Sat Jan 23</text><text x="354.8" y="872.7" font-size="9.6" letter-spacing="-0.3" fill="#111" text-anchor="middle" font-family="Liberation Sans">10.20</text><text x="382.9" y="872.7" font-size="9.6" letter-spacing="-0.3" fill="#111" text-anchor="middle" font-family="Liberation Sans">10.00</text><text x="410.9" y="872.7" font-size="9.6" letter-spacing="-0.3" fill="#111" text-anchor="middle" font-family="Liberation Sans">10.10</text><text x="439.0" y="872.7" font-size="9.6" letter-spacing="-0.3" fill="#111" text-anchor="middle" font-family="Liberation Sans">10.50</text><text x="467.0" y="872.7" font-size="9.6" letter-spacing="-0.3" fill="#111" text-anchor="middle" font-family="Liberation Sans">10.00</text><text x="495.1" y="872.7" font-size="9.6" letter-spacing="-0.3" fill="#111" text-anchor="middle" font-family="Liberation Sans">10.20</text><text x="523.1" y="872.7" font-size="9.6" letter-spacing="-0.3" fill="#111" text-anchor="middle" font-family="Liberation Sans">14.50</text><text x="551.2" y="872.7" font-size="9.6" letter-spacing="-0.3" fill="#111" text-anchor="middle" font-family="Liberation Sans">26.50</text><text x="579.2" y="872.7" font-size="9.6" letter-spacing="-0.3" fill="#111" text-anchor="middle" font-family="Liberation Sans">45.10</text><text x="607.3" y="872.7" font-size="9.6" letter-spacing="-0.3" fill="#111" text-anchor="middle" font-family="Liberation Sans">42.40</text><text x="635.3" y="872.7" font-size="9.6" letter-spacing="-0.3" fill="#111" text-anchor="middle" font-family="Liberation Sans">44.00</text><text x="663.4" y="872.7" font-size="9.6" letter-spacing="-0.3" fill="#111" text-anchor="middle" font-family="Liberation Sans">41.70</text><text x="691.4" y="872.7" font-size="9.6" letter-spacing="-0.3" fill="#111" text-anchor="middle" font-family="Liberation Sans">42.00</text><text x="719.5" y="872.7" font-size="9.6" letter-spacing="-0.3" fill="#111" text-anchor="middle" font-family="Liberation Sans">42.80</text><text x="747.5" y="872.7" font-size="9.6" letter-spacing="-0.3" fill="#111" text-anchor="middle" font-family="Liberation Sans">41.50</text><text x="775.6" y="872.7" font-size="9.6" letter-spacing="-0.3" fill="#111" text-anchor="middle" font-family="Liberation Sans">40.40</text><text x="803.6" y="872.7" font-size="9.6" letter-spacing="-0.3" fill="#111" text-anchor="middle" font-family="Liberation Sans">40.10</text><text x="831.7" y="872.7" font-size="9.6" letter-spacing="-0.3" fill="#111" text-anchor="middle" font-family="Liberation Sans">39.30</text><text x="859.7" y="872.7" font-size="9.6" letter-spacing="-0.3" fill="#111" text-anchor="middle" font-family="Liberation Sans">18.70</text><text x="887.8" y="872.7" font-size="9.6" letter-spacing="-0.3" fill="#111" text-anchor="middle" font-family="Liberation Sans">14.70</text><text x="915.8" y="872.7" font-size="9.6" letter-spacing="-0.3" fill="#111" text-anchor="middle" font-family="Liberation Sans">13.90</text><text x="943.9" y="872.7" font-size="9.6" letter-spacing="-0.3" fill="#111" text-anchor="middle" font-family="Liberation Sans">10.00</text><text x="971.9" y="872.7" font-size="9.6" letter-spacing="-0.3" fill="#111" text-anchor="middle" font-family="Liberation Sans">10.00</text><text x="1000.0" y="872.7" font-size="9.6" letter-spacing="-0.3" fill="#111" text-anchor="middle" font-family="Liberation Sans">10.30</text><text x="332" y="886.1" font-size="10" fill="#a2a2a2" text-anchor="end" font-family="Liberation Sans">Sun Jan 24</text><text x="354.8" y="886.1" font-size="9.6" letter-spacing="-0.3" fill="#111" text-anchor="middle" font-family="Liberation Sans">10.10</text><text x="382.9" y="886.1" font-size="9.6" letter-spacing="-0.3" fill="#111" text-anchor="middle" font-family="Liberation Sans">10.20</text><text x="410.9" y="886.1" font-size="9.6" letter-spacing="-0.3" fill="#111" text-anchor="middle" font-family="Liberation Sans">10.50</text><text x="439.0" y="886.1" font-size="9.6" letter-spacing="-0.3" fill="#111" text-anchor="middle" font-family="Liberation Sans">10.30</text><text x="467.0" y="886.1" font-size="9.6" letter-spacing="-0.3" fill="#111" text-anchor="middle" font-family="Liberation Sans">10.30</text><text x="495.1" y="886.1" font-size="9.6" letter-spacing="-0.3" fill="#111" text-anchor="middle" font-family="Liberation Sans">10.30</text><text x="523.1" y="886.1" font-size="9.6" letter-spacing="-0.3" fill="#111" text-anchor="middle" font-family="Liberation Sans">10.10</text><text x="551.2" y="886.1" font-size="9.6" letter-spacing="-0.3" fill="#111" text-anchor="middle" font-family="Liberation Sans">10.30</text><text x="579.2" y="886.1" font-size="9.6" letter-spacing="-0.3" fill="#111" text-anchor="middle" font-family="Liberation Sans">13.30</text><text x="607.3" y="886.1" font-size="9.6" letter-spacing="-0.3" fill="#111" text-anchor="middle" font-family="Liberation Sans">23.90</text><text x="635.3" y="886.1" font-size="9.6" letter-spacing="-0.3" fill="#111" text-anchor="middle" font-family="Liberation Sans">37.70</text><text x="663.4" y="886.1" font-size="9.6" letter-spacing="-0.3" fill="#111" text-anchor="middle" font-family="Liberation Sans">37.50</text><text x="691.4" y="886.1" font-size="9.6" letter-spacing="-0.3" fill="#111" text-anchor="middle" font-family="Liberation Sans">37.90</text><text x="719.5" y="886.1" font-size="9.6" letter-spacing="-0.3" fill="#111" text-anchor="middle" font-family="Liberation Sans">38.60</text><text x="747.5" y="886.1" font-size="9.6" letter-spacing="-0.3" fill="#111" text-anchor="middle" font-family="Liberation Sans">38.30</text><text x="775.6" y="886.1" font-size="9.6" letter-spacing="-0.3" fill="#111" text-anchor="middle" font-family="Liberation Sans">37.90</text><text x="803.6" y="886.1" font-size="9.6" letter-spacing="-0.3" fill="#111" text-anchor="middle" font-family="Liberation Sans">18.00</text><text x="831.7" y="886.1" font-size="9.6" letter-spacing="-0.3" fill="#111" text-anchor="middle" font-family="Liberation Sans">10.30</text><text x="859.7" y="886.1" font-size="9.6" letter-spacing="-0.3" fill="#111" text-anchor="middle" font-family="Liberation Sans">10.60</text><text x="887.8" y="886.1" font-size="9.6" letter-spacing="-0.3" fill="#111" text-anchor="middle" font-family="Liberation Sans">10.20</text><text x="915.8" y="886.1" font-size="9.6" letter-spacing="-0.3" fill="#111" text-anchor="middle" font-family="Liberation Sans">10.40</text><text x="943.9" y="886.1" font-size="9.6" letter-spacing="-0.3" fill="#111" text-anchor="middle" font-family="Liberation Sans">10.60</text><text x="971.9" y="886.1" font-size="9.6" letter-spacing="-0.3" fill="#111" text-anchor="middle" font-family="Liberation Sans">10.20</text><text x="1000.0" y="886.1" font-size="9.6" letter-spacing="-0.3" fill="#111" text-anchor="middle" font-family="Liberation Sans">10.40</text><text x="332" y="899.5" font-size="10" fill="#a2a2a2" text-anchor="end" font-family="Liberation Sans">Mon Jan 25</text><text x="354.8" y="899.5" font-size="9.6" letter-spacing="-0.3" fill="#111" text-anchor="middle" font-family="Liberation Sans">10.50</text><text x="382.9" y="899.5" font-size="9.6" letter-spacing="-0.3" fill="#111" text-anchor="middle" font-family="Liberation Sans">10.20</text><text x="410.9" y="899.5" font-size="9.6" letter-spacing="-0.3" fill="#111" text-anchor="middle" font-family="Liberation Sans">10.50</text><text x="439.0" y="899.5" font-size="9.6" letter-spacing="-0.3" fill="#111" text-anchor="middle" font-family="Liberation Sans">10.50</text><text x="467.0" y="899.5" font-size="9.6" letter-spacing="-0.3" fill="#111" text-anchor="middle" font-family="Liberation Sans">10.40</text><text x="495.1" y="899.5" font-size="9.6" letter-spacing="-0.3" fill="#111" text-anchor="middle" font-family="Liberation Sans">11.40</text><text x="523.1" y="899.5" font-size="9.6" letter-spacing="-0.3" fill="#111" text-anchor="middle" font-family="Liberation Sans">14.90</text><text x="551.2" y="899.5" font-size="9.6" letter-spacing="-0.3" fill="#111" text-anchor="middle" font-family="Liberation Sans">18.80</text><text x="579.2" y="899.5" font-size="9.6" letter-spacing="-0.3" fill="#111" text-anchor="middle" font-family="Liberation Sans">37.80</text><text x="607.3" y="899.5" font-size="9.6" letter-spacing="-0.3" fill="#111" text-anchor="middle" font-family="Liberation Sans">40.40</text><text x="635.3" y="899.5" font-size="9.6" letter-spacing="-0.3" fill="#111" text-anchor="middle" font-family="Liberation Sans">41.10</text><text x="663.4" y="899.5" font-size="9.6" letter-spacing="-0.3" fill="#111" text-anchor="middle" font-family="Liberation Sans">41.40</text><text x="691.4" y="899.5" font-size="9.6" letter-spacing="-0.3" fill="#111" text-anchor="middle" font-family="Liberation Sans">40.70</text><text x="719.5" y="899.5" font-size="9.6" letter-spacing="-0.3" fill="#111" text-anchor="middle" font-family="Liberation Sans">41.40</text><text x="747.5" y="899.5" font-size="9.6" letter-spacing="-0.3" fill="#111" text-anchor="middle" font-family="Liberation Sans">41.00</text><text x="775.6" y="899.5" font-size="9.6" letter-spacing="-0.3" fill="#111" text-anchor="middle" font-family="Liberation Sans">38.60</text><text x="803.6" y="899.5" font-size="9.6" letter-spacing="-0.3" fill="#111" text-anchor="middle" font-family="Liberation Sans">38.10</text><text x="831.7" y="899.5" font-size="9.6" letter-spacing="-0.3" fill="#111" text-anchor="middle" font-family="Liberation Sans">30.70</text><text x="859.7" y="899.5" font-size="9.6" letter-spacing="-0.3" fill="#111" text-anchor="middle" font-family="Liberation Sans">14.20</text><text x="887.8" y="899.5" font-size="9.6" letter-spacing="-0.3" fill="#111" text-anchor="middle" font-family="Liberation Sans">14.10</text><text x="915.8" y="899.5" font-size="9.6" letter-spacing="-0.3" fill="#111" text-anchor="middle" font-family="Liberation Sans">10.70</text><text x="943.9" y="899.5" font-size="9.6" letter-spacing="-0.3" fill="#111" text-anchor="middle" font-family="Liberation Sans">10.60</text><text x="971.9" y="899.5" font-size="9.6" letter-spacing="-0.3" fill="#111" text-anchor="middle" font-family="Liberation Sans">10.30</text><text x="1000.0" y="899.5" font-size="9.6" letter-spacing="-0.3" fill="#111" text-anchor="middle" font-family="Liberation Sans">10.30</text><text x="332" y="912.9" font-size="10" fill="#a2a2a2" text-anchor="end" font-family="Liberation Sans">Tue Jan 26</text><text x="354.8" y="912.9" font-size="9.6" letter-spacing="-0.3" fill="#111" text-anchor="middle" font-family="Liberation Sans">10.00</text><text x="382.9" y="912.9" font-size="9.6" letter-spacing="-0.3" fill="#111" text-anchor="middle" font-family="Liberation Sans">10.30</text><text x="410.9" y="912.9" font-size="9.6" letter-spacing="-0.3" fill="#111" text-anchor="middle" font-family="Liberation Sans">10.40</text><text x="439.0" y="912.9" font-size="9.6" letter-spacing="-0.3" fill="#111" text-anchor="middle" font-family="Liberation Sans">10.10</text><text x="467.0" y="912.9" font-size="9.6" letter-spacing="-0.3" fill="#111" text-anchor="middle" font-family="Liberation Sans">10.30</text><text x="495.1" y="912.9" font-size="9.6" letter-spacing="-0.3" fill="#111" text-anchor="middle" font-family="Liberation Sans">10.40</text><text x="523.1" y="912.9" font-size="9.6" letter-spacing="-0.3" fill="#111" text-anchor="middle" font-family="Liberation Sans">14.80</text><text x="551.2" y="912.9" font-size="9.6" letter-spacing="-0.3" fill="#111" text-anchor="middle" font-family="Liberation Sans">18.70</text><text x="579.2" y="912.9" font-size="9.6" letter-spacing="-0.3" fill="#111" text-anchor="middle" font-family="Liberation Sans">37.70</text><text x="607.3" y="912.9" font-size="9.6" letter-spacing="-0.3" fill="#111" text-anchor="middle" font-family="Liberation Sans">40.20</text><text x="635.3" y="912.9" font-size="9.6" letter-spacing="-0.3" fill="#111" text-anchor="middle" font-family="Liberation Sans">41.30</text><text x="663.4" y="912.9" font-size="9.6" letter-spacing="-0.3" fill="#111" text-anchor="middle" font-family="Liberation Sans">41.60</text><text x="691.4" y="912.9" font-size="9.6" letter-spacing="-0.3" fill="#111" text-anchor="middle" font-family="Liberation Sans">41.10</text><text x="719.5" y="912.9" font-size="9.6" letter-spacing="-0.3" fill="#111" text-anchor="middle" font-family="Liberation Sans">37.90</text><text x="747.5" y="912.9" font-size="9.6" letter-spacing="-0.3" fill="#111" text-anchor="middle" font-family="Liberation Sans">37.70</text><text x="775.6" y="912.9" font-size="9.6" letter-spacing="-0.3" fill="#111" text-anchor="middle" font-family="Liberation Sans">36.80</text><text x="803.6" y="912.9" font-size="9.6" letter-spacing="-0.3" fill="#111" text-anchor="middle" font-family="Liberation Sans">36.90</text><text x="831.7" y="912.9" font-size="9.6" letter-spacing="-0.3" fill="#111" text-anchor="middle" font-family="Liberation Sans">28.70</text><text x="859.7" y="912.9" font-size="9.6" letter-spacing="-0.3" fill="#111" text-anchor="middle" font-family="Liberation Sans">12.80</text><text x="887.8" y="912.9" font-size="9.6" letter-spacing="-0.3" fill="#111" text-anchor="middle" font-family="Liberation Sans">12.70</text><text x="915.8" y="912.9" font-size="9.6" letter-spacing="-0.3" fill="#111" text-anchor="middle" font-family="Liberation Sans">11.40</text><text x="943.9" y="912.9" font-size="9.6" letter-spacing="-0.3" fill="#111" text-anchor="middle" font-family="Liberation Sans">7.90</text><text x="971.9" y="912.9" font-size="9.6" letter-spacing="-0.3" fill="#111" text-anchor="middle" font-family="Liberation Sans">8.00</text><text x="1000.0" y="912.9" font-size="9.6" letter-spacing="-0.3" fill="#111" text-anchor="middle" font-family="Liberation Sans">7.90</text><text x="332" y="926.2" font-size="10" fill="#a2a2a2" text-anchor="end" font-family="Liberation Sans">Wed Jan 27</text><text x="354.8" y="926.2" font-size="9.6" letter-spacing="-0.3" fill="#111" text-anchor="middle" font-family="Liberation Sans">7.90</text><text x="382.9" y="926.2" font-size="9.6" letter-spacing="-0.3" fill="#111" text-anchor="middle" font-family="Liberation Sans">8.00</text><text x="410.9" y="926.2" font-size="9.6" letter-spacing="-0.3" fill="#111" text-anchor="middle" font-family="Liberation Sans">8.00</text><text x="439.0" y="926.2" font-size="9.6" letter-spacing="-0.3" fill="#111" text-anchor="middle" font-family="Liberation Sans">7.80</text><text x="467.0" y="926.2" font-size="9.6" letter-spacing="-0.3" fill="#111" text-anchor="middle" font-family="Liberation Sans">8.10</text><text x="495.1" y="926.2" font-size="9.6" letter-spacing="-0.3" fill="#111" text-anchor="middle" font-family="Liberation Sans">8.00</text><text x="523.1" y="926.2" font-size="9.6" letter-spacing="-0.3" fill="#111" text-anchor="middle" font-family="Liberation Sans">12.50</text><text x="551.2" y="926.2" font-size="9.6" letter-spacing="-0.3" fill="#111" text-anchor="middle" font-family="Liberation Sans">16.20</text><text x="579.2" y="926.2" font-size="9.6" letter-spacing="-0.3" fill="#111" text-anchor="middle" font-family="Liberation Sans">35.30</text><text x="607.3" y="926.2" font-size="9.6" letter-spacing="-0.3" fill="#111" text-anchor="middle" font-family="Liberation Sans">38.20</text><text x="635.3" y="926.2" font-size="9.6" letter-spacing="-0.3" fill="#111" text-anchor="middle" font-family="Liberation Sans">39.00</text><text x="663.4" y="926.2" font-size="9.6" letter-spacing="-0.3" fill="#111" text-anchor="middle" font-family="Liberation Sans">38.40</text><text x="691.4" y="926.2" font-size="9.6" letter-spacing="-0.3" fill="#111" text-anchor="middle" font-family="Liberation Sans">39.70</text><text x="719.5" y="926.2" font-size="9.6" letter-spacing="-0.3" fill="#111" text-anchor="middle" font-family="Liberation Sans">39.10</text><text x="747.5" y="926.2" font-size="9.6" letter-spacing="-0.3" fill="#111" text-anchor="middle" font-family="Liberation Sans">38.60</text><text x="775.6" y="926.2" font-size="9.6" letter-spacing="-0.3" fill="#111" text-anchor="middle" font-family="Liberation Sans">36.90</text><text x="803.6" y="926.2" font-size="9.6" letter-spacing="-0.3" fill="#111" text-anchor="middle" font-family="Liberation Sans">37.00</text><text x="831.7" y="926.2" font-size="9.6" letter-spacing="-0.3" fill="#111" text-anchor="middle" font-family="Liberation Sans">29.50</text><text x="859.7" y="926.2" font-size="9.6" letter-spacing="-0.3" fill="#111" text-anchor="middle" font-family="Liberation Sans">12.10</text><text x="887.8" y="926.2" font-size="9.6" letter-spacing="-0.3" fill="#111" text-anchor="middle" font-family="Liberation Sans">11.40</text><text x="915.8" y="926.2" font-size="9.6" letter-spacing="-0.3" fill="#111" text-anchor="middle" font-family="Liberation Sans">8.20</text><text x="943.9" y="926.2" font-size="9.6" letter-spacing="-0.3" fill="#111" text-anchor="middle" font-family="Liberation Sans">7.90</text><text x="971.9" y="926.2" font-size="9.6" letter-spacing="-0.3" fill="#111" text-anchor="middle" font-family="Liberation Sans">7.70</text><text x="1000.0" y="926.2" font-size="9.6" letter-spacing="-0.3" fill="#111" text-anchor="middle" font-family="Liberation Sans">7.50</text><text x="332" y="939.6" font-size="10" fill="#a2a2a2" text-anchor="end" font-family="Liberation Sans">Thu Jan 28</text><text x="354.8" y="939.6" font-size="9.6" letter-spacing="-0.3" fill="#111" text-anchor="middle" font-family="Liberation Sans">7.90</text><text x="382.9" y="939.6" font-size="9.6" letter-spacing="-0.3" fill="#111" text-anchor="middle" font-family="Liberation Sans">7.60</text><text x="410.9" y="939.6" font-size="9.6" letter-spacing="-0.3" fill="#111" text-anchor="middle" font-family="Liberation Sans">7.70</text><text x="439.0" y="939.6" font-size="9.6" letter-spacing="-0.3" fill="#111" text-anchor="middle" font-family="Liberation Sans">7.70</text><text x="467.0" y="939.6" font-size="9.6" letter-spacing="-0.3" fill="#111" text-anchor="middle" font-family="Liberation Sans">7.60</text><text x="495.1" y="939.6" font-size="9.6" letter-spacing="-0.3" fill="#111" text-anchor="middle" font-family="Liberation Sans">8.00</text><text x="523.1" y="939.6" font-size="9.6" letter-spacing="-0.3" fill="#111" text-anchor="middle" font-family="Liberation Sans">12.40</text><text x="551.2" y="939.6" font-size="9.6" letter-spacing="-0.3" fill="#111" text-anchor="middle" font-family="Liberation Sans">16.00</text><text x="579.2" y="939.6" font-size="9.6" letter-spacing="-0.3" fill="#111" text-anchor="middle" font-family="Liberation Sans">35.30</text><text x="607.3" y="939.6" font-size="9.6" letter-spacing="-0.3" fill="#111" text-anchor="middle" font-family="Liberation Sans">39.20</text><text x="635.3" y="939.6" font-size="9.6" letter-spacing="-0.3" fill="#111" text-anchor="middle" font-family="Liberation Sans">38.70</text><text x="663.4" y="939.6" font-size="9.6" letter-spacing="-0.3" fill="#111" text-anchor="middle" font-family="Liberation Sans">40.00</text><text x="691.4" y="939.6" font-size="9.6" letter-spacing="-0.3" fill="#111" text-anchor="middle" font-family="Liberation Sans">39.20</text><text x="719.5" y="939.6" font-size="9.6" letter-spacing="-0.3" fill="#111" text-anchor="middle" font-family="Liberation Sans">39.70</text><text x="747.5" y="939.6" font-size="9.6" letter-spacing="-0.3" fill="#111" text-anchor="middle" font-family="Liberation Sans">38.20</text><text x="775.6" y="939.6" font-size="9.6" letter-spacing="-0.3" fill="#111" text-anchor="middle" font-family="Liberation Sans">37.60</text><text x="803.6" y="939.6" font-size="9.6" letter-spacing="-0.3" fill="#111" text-anchor="middle" font-family="Liberation Sans">36.90</text><text x="831.7" y="939.6" font-size="9.6" letter-spacing="-0.3" fill="#111" text-anchor="middle" font-family="Liberation Sans">29.30</text><text x="859.7" y="939.6" font-size="9.6" letter-spacing="-0.3" fill="#111" text-anchor="middle" font-family="Liberation Sans">12.80</text><text x="887.8" y="939.6" font-size="9.6" letter-spacing="-0.3" fill="#111" text-anchor="middle" font-family="Liberation Sans">12.60</text><text x="915.8" y="939.6" font-size="9.6" letter-spacing="-0.3" fill="#111" text-anchor="middle" font-family="Liberation Sans">11.40</text><text x="943.9" y="939.6" font-size="9.6" letter-spacing="-0.3" fill="#111" text-anchor="middle" font-family="Liberation Sans">7.80</text><text x="971.9" y="939.6" font-size="9.6" letter-spacing="-0.3" fill="#111" text-anchor="middle" font-family="Liberation Sans">8.00</text><text x="1000.0" y="939.6" font-size="9.6" letter-spacing="-0.3" fill="#111" text-anchor="middle" font-family="Liberation Sans">7.70</text><text x="332" y="953.0" font-size="10" fill="#a2a2a2" text-anchor="end" font-family="Liberation Sans">Fri Jan 29</text><text x="354.8" y="953.0" font-size="9.6" letter-spacing="-0.3" fill="#111" text-anchor="middle" font-family="Liberation Sans">8.10</text><text x="382.9" y="953.0" font-size="9.6" letter-spacing="-0.3" fill="#111" text-anchor="middle" font-family="Liberation Sans">7.90</text><text x="410.9" y="953.0" font-size="9.6" letter-spacing="-0.3" fill="#111" text-anchor="middle" font-family="Liberation Sans">7.80</text><text x="439.0" y="953.0" font-size="9.6" letter-spacing="-0.3" fill="#111" text-anchor="middle" font-family="Liberation Sans">7.90</text><text x="467.0" y="953.0" font-size="9.6" letter-spacing="-0.3" fill="#111" text-anchor="middle" font-family="Liberation Sans">8.20</text><text x="495.1" y="953.0" font-size="9.6" letter-spacing="-0.3" fill="#111" text-anchor="middle" font-family="Liberation Sans">9.30</text><text x="523.1" y="953.0" font-size="9.6" letter-spacing="-0.3" fill="#111" text-anchor="middle" font-family="Liberation Sans">12.40</text><text x="551.2" y="953.0" font-size="9.6" letter-spacing="-0.3" fill="#111" text-anchor="middle" font-family="Liberation Sans">15.20</text><text x="579.2" y="953.0" font-size="9.6" letter-spacing="-0.3" fill="#111" text-anchor="middle" font-family="Liberation Sans">34.70</text><text x="607.3" y="953.0" font-size="9.6" letter-spacing="-0.3" fill="#111" text-anchor="middle" font-family="Liberation Sans">36.80</text><text x="635.3" y="953.0" font-size="9.6" letter-spacing="-0.3" fill="#111" text-anchor="middle" font-family="Liberation Sans">39.00</text><text x="663.4" y="953.0" font-size="9.6" letter-spacing="-0.3" fill="#111" text-anchor="middle" font-family="Liberation Sans">38.90</text><text x="691.4" y="953.0" font-size="9.6" letter-spacing="-0.3" fill="#111" text-anchor="middle" font-family="Liberation Sans">38.50</text><text x="719.5" y="953.0" font-size="9.6" letter-spacing="-0.3" fill="#111" text-anchor="middle" font-family="Liberation Sans">38.60</text><text x="747.5" y="953.0" font-size="9.6" letter-spacing="-0.3" fill="#111" text-anchor="middle" font-family="Liberation Sans">38.80</text><text x="775.6" y="953.0" font-size="9.6" letter-spacing="-0.3" fill="#111" text-anchor="middle" font-family="Liberation Sans">38.40</text><text x="803.6" y="953.0" font-size="9.6" letter-spacing="-0.3" fill="#111" text-anchor="middle" font-family="Liberation Sans">37.00</text><text x="831.7" y="953.0" font-size="9.6" letter-spacing="-0.3" fill="#111" text-anchor="middle" font-family="Liberation Sans">28.10</text><text x="859.7" y="953.0" font-size="9.6" letter-spacing="-0.3" fill="#111" text-anchor="middle" font-family="Liberation Sans">11.60</text><text x="887.8" y="953.0" font-size="9.6" letter-spacing="-0.3" fill="#111" text-anchor="middle" font-family="Liberation Sans">11.70</text><text x="915.8" y="953.0" font-size="9.6" letter-spacing="-0.3" fill="#111" text-anchor="middle" font-family="Liberation Sans">8.20</text><text x="943.9" y="953.0" font-size="9.6" letter-spacing="-0.3" fill="#111" text-anchor="middle" font-family="Liberation Sans">8.60</text><text x="971.9" y="953.0" font-size="9.6" letter-spacing="-0.3" fill="#111" text-anchor="middle" font-family="Liberation Sans">7.90</text><text x="1000.0" y="953.0" font-size="9.6" letter-spacing="-0.3" fill="#111" text-anchor="middle" font-family="Liberation Sans">7.70</text><text x="332" y="966.4" font-size="10" fill="#a2a2a2" text-anchor="end" font-family="Liberation Sans">Sat Jan 30</text><text x="354.8" y="966.4" font-size="9.6" letter-spacing="-0.3" fill="#111" text-anchor="middle" font-family="Liberation Sans">7.80</text><text x="382.9" y="966.4" font-size="9.6" letter-spacing="-0.3" fill="#111" text-anchor="middle" font-family="Liberation Sans">8.10</text><text x="410.9" y="966.4" font-size="9.6" letter-spacing="-0.3" fill="#111" text-anchor="middle" font-family="Liberation Sans">7.70</text><text x="439.0" y="966.4" font-size="9.6" letter-spacing="-0.3" fill="#111" text-anchor="middle" font-family="Liberation Sans">7.90</text><text x="467.0" y="966.4" font-size="9.6" letter-spacing="-0.3" fill="#111" text-anchor="middle" font-family="Liberation Sans">7.60</text><text x="495.1" y="966.4" font-size="9.6" letter-spacing="-0.3" fill="#111" text-anchor="middle" font-family="Liberation Sans">8.10</text><text x="523.1" y="966.4" font-size="9.6" letter-spacing="-0.3" fill="#111" text-anchor="middle" font-family="Liberation Sans">12.00</text><text x="551.2" y="966.4" font-size="9.6" letter-spacing="-0.3" fill="#111" text-anchor="middle" font-family="Liberation Sans">24.20</text><text x="579.2" y="966.4" font-size="9.6" letter-spacing="-0.3" fill="#111" text-anchor="middle" font-family="Liberation Sans">38.10</text><text x="607.3" y="966.4" font-size="9.6" letter-spacing="-0.3" fill="#111" text-anchor="middle" font-family="Liberation Sans">39.80</text><text x="635.3" y="966.4" font-size="9.6" letter-spacing="-0.3" fill="#111" text-anchor="middle" font-family="Liberation Sans">40.40</text><text x="663.4" y="966.4" font-size="9.6" letter-spacing="-0.3" fill="#111" text-anchor="middle" font-family="Liberation Sans">41.10</text><text x="691.4" y="966.4" font-size="9.6" letter-spacing="-0.3" fill="#111" text-anchor="middle" font-family="Liberation Sans">41.00</text><text x="719.5" y="966.4" font-size="9.6" letter-spacing="-0.3" fill="#111" text-anchor="middle" font-family="Liberation Sans">41.40</text><text x="747.5" y="966.4" font-size="9.6" letter-spacing="-0.3" fill="#111" text-anchor="middle" font-family="Liberation Sans">41.00</text><text x="775.6" y="966.4" font-size="9.6" letter-spacing="-0.3" fill="#111" text-anchor="middle" font-family="Liberation Sans">40.00</text><text x="803.6" y="966.4" font-size="9.6" letter-spacing="-0.3" fill="#111" text-anchor="middle" font-family="Liberation Sans">41.10</text><text x="831.7" y="966.4" font-size="9.6" letter-spacing="-0.3" fill="#111" text-anchor="middle" font-family="Liberation Sans">38.80</text><text x="859.7" y="966.4" font-size="9.6" letter-spacing="-0.3" fill="#111" text-anchor="middle" font-family="Liberation Sans">18.80</text><text x="887.8" y="966.4" font-size="9.6" letter-spacing="-0.3" fill="#111" text-anchor="middle" font-family="Liberation Sans">14.50</text><text x="915.8" y="966.4" font-size="9.6" letter-spacing="-0.3" fill="#111" text-anchor="middle" font-family="Liberation Sans">13.50</text><text x="943.9" y="966.4" font-size="9.6" letter-spacing="-0.3" fill="#111" text-anchor="middle" font-family="Liberation Sans">10.10</text><text x="971.9" y="966.4" font-size="9.6" letter-spacing="-0.3" fill="#111" text-anchor="middle" font-family="Liberation Sans">10.10</text><text x="1000.0" y="966.4" font-size="9.6" letter-spacing="-0.3" fill="#111" text-anchor="middle" font-family="Liberation Sans">10.20</text><text x="332" y="979.8" font-size="10" fill="#a2a2a2" text-anchor="end" font-family="Liberation Sans">Sun Jan 31</text><text x="354.8" y="979.8" font-size="9.6" letter-spacing="-0.3" fill="#111" text-anchor="middle" font-family="Liberation Sans">9.80</text><text x="382.9" y="979.8" font-size="9.6" letter-spacing="-0.3" fill="#111" text-anchor="middle" font-family="Liberation Sans">10.20</text><text x="410.9" y="979.8" font-size="9.6" letter-spacing="-0.3" fill="#111" text-anchor="middle" font-family="Liberation Sans">10.20</text><text x="439.0" y="979.8" font-size="9.6" letter-spacing="-0.3" fill="#111" text-anchor="middle" font-family="Liberation Sans">9.70</text><text x="467.0" y="979.8" font-size="9.6" letter-spacing="-0.3" fill="#111" text-anchor="middle" font-family="Liberation Sans">10.10</text><text x="495.1" y="979.8" font-size="9.6" letter-spacing="-0.3" fill="#111" text-anchor="middle" font-family="Liberation Sans">10.30</text><text x="523.1" y="979.8" font-size="9.6" letter-spacing="-0.3" fill="#111" text-anchor="middle" font-family="Liberation Sans">10.00</text><text x="551.2" y="979.8" font-size="9.6" letter-spacing="-0.3" fill="#111" text-anchor="middle" font-family="Liberation Sans">10.00</text><text x="579.2" y="979.8" font-size="9.6" letter-spacing="-0.3" fill="#111" text-anchor="middle" font-family="Liberation Sans">13.50</text><text x="607.3" y="979.8" font-size="9.6" letter-spacing="-0.3" fill="#111" text-anchor="middle" font-family="Liberation Sans">24.20</text><text x="635.3" y="979.8" font-size="9.6" letter-spacing="-0.3" fill="#111" text-anchor="middle" font-family="Liberation Sans">40.30</text><text x="663.4" y="979.8" font-size="9.6" letter-spacing="-0.3" fill="#111" text-anchor="middle" font-family="Liberation Sans">40.20</text><text x="691.4" y="979.8" font-size="9.6" letter-spacing="-0.3" fill="#111" text-anchor="middle" font-family="Liberation Sans">40.10</text><text x="719.5" y="979.8" font-size="9.6" letter-spacing="-0.3" fill="#111" text-anchor="middle" font-family="Liberation Sans">40.80</text><text x="747.5" y="979.8" font-size="9.6" letter-spacing="-0.3" fill="#111" text-anchor="middle" font-family="Liberation Sans">33.90</text><text x="775.6" y="979.8" font-size="9.6" letter-spacing="-0.3" fill="#111" text-anchor="middle" font-family="Liberation Sans">17.00</text><text x="803.6" y="979.8" font-size="9.6" letter-spacing="-0.3" fill="#111" text-anchor="middle" font-family="Liberation Sans">12.70</text><text x="831.7" y="979.8" font-size="9.6" letter-spacing="-0.3" fill="#111" text-anchor="middle" font-family="Liberation Sans">7.80</text><text x="859.7" y="979.8" font-size="9.6" letter-spacing="-0.3" fill="#111" text-anchor="middle" font-family="Liberation Sans">7.60</text><text x="887.8" y="979.8" font-size="9.6" letter-spacing="-0.3" fill="#111" text-anchor="middle" font-family="Liberation Sans">7.70</text><text x="915.8" y="979.8" font-size="9.6" letter-spacing="-0.3" fill="#111" text-anchor="middle" font-family="Liberation Sans">7.70</text><text x="943.9" y="979.8" font-size="9.6" letter-spacing="-0.3" fill="#111" text-anchor="middle" font-family="Liberation Sans">7.50</text><text x="971.9" y="979.8" font-size="9.6" letter-spacing="-0.3" fill="#111" text-anchor="middle" font-family="Liberation Sans">7.30</text><text x="1000.0" y="979.8" font-size="9.6" letter-spacing="-0.3" fill="#111" text-anchor="middle" font-family="Liberation Sans">7.70</text><line x1="340.8" y1="985" x2="340.8" y2="990" stroke="#6a6a6a" stroke-width="1.5"/><text x="339.8" y="1006" font-size="10.5" fill="#9a9a9a" text-anchor="middle" font-family="Liberation Sans">0</text><line x1="368.9" y1="985" x2="368.9" y2="990" stroke="#6a6a6a" stroke-width="1.5"/><text x="367.9" y="1006" font-size="10.5" fill="#9a9a9a" text-anchor="middle" font-family="Liberation Sans">1</text><line x1="396.9" y1="985" x2="396.9" y2="990" stroke="#6a6a6a" stroke-width="1.5"/><text x="395.9" y="1006" font-size="10.5" fill="#9a9a9a" text-anchor="middle" font-family="Liberation Sans">2</text><line x1="425.0" y1="985" x2="425.0" y2="990" stroke="#6a6a6a" stroke-width="1.5"/><text x="424.0" y="1006" font-size="10.5" fill="#9a9a9a" text-anchor="middle" font-family="Liberation Sans">3</text><line x1="453.0" y1="985" x2="453.0" y2="990" stroke="#6a6a6a" stroke-width="1.5"/><text x="452.0" y="1006" font-size="10.5" fill="#9a9a9a" text-anchor="middle" font-family="Liberation Sans">4</text><line x1="481.1" y1="985" x2="481.1" y2="990" stroke="#6a6a6a" stroke-width="1.5"/><text x="480.1" y="1006" font-size="10.5" fill="#9a9a9a" text-anchor="middle" font-family="Liberation Sans">5</text><line x1="509.1" y1="985" x2="509.1" y2="990" stroke="#6a6a6a" stroke-width="1.5"/><text x="508.1" y="1006" font-size="10.5" fill="#9a9a9a" text-anchor="middle" font-family="Liberation Sans">6</text><line x1="537.1" y1="985" x2="537.1" y2="990" stroke="#6a6a6a" stroke-width="1.5"/><text x="536.1" y="1006" font-size="10.5" fill="#9a9a9a" text-anchor="middle" font-family="Liberation Sans">7</text><line x1="565.2" y1="985" x2="565.2" y2="990" stroke="#6a6a6a" stroke-width="1.5"/><text x="564.2" y="1006" font-size="10.5" fill="#9a9a9a" text-anchor="middle" font-family="Liberation Sans">8</text><line x1="593.2" y1="985" x2="593.2" y2="990" stroke="#6a6a6a" stroke-width="1.5"/><text x="592.2" y="1006" font-size="10.5" fill="#9a9a9a" text-anchor="middle" font-family="Liberation Sans">9</text><line x1="621.3" y1="985" x2="621.3" y2="990" stroke="#6a6a6a" stroke-width="1.5"/><text x="620.3" y="1006" font-size="10.5" fill="#9a9a9a" text-anchor="middle" font-family="Liberation Sans">10</text><line x1="649.4" y1="985" x2="649.4" y2="990" stroke="#6a6a6a" stroke-width="1.5"/><text x="648.4" y="1006" font-size="10.5" fill="#9a9a9a" text-anchor="middle" font-family="Liberation Sans">11</text><line x1="677.4" y1="985" x2="677.4" y2="990" stroke="#6a6a6a" stroke-width="1.5"/><text x="676.4" y="1006" font-size="10.5" fill="#9a9a9a" text-anchor="middle" font-family="Liberation Sans">12</text><line x1="705.5" y1="985" x2="705.5" y2="990" stroke="#6a6a6a" stroke-width="1.5"/><text x="704.5" y="1006" font-size="10.5" fill="#9a9a9a" text-anchor="middle" font-family="Liberation Sans">13</text><line x1="733.5" y1="985" x2="733.5" y2="990" stroke="#6a6a6a" stroke-width="1.5"/><text x="732.5" y="1006" font-size="10.5" fill="#9a9a9a" text-anchor="middle" font-family="Liberation Sans">14</text><line x1="761.5" y1="985" x2="761.5" y2="990" stroke="#6a6a6a" stroke-width="1.5"/><text x="760.5" y="1006" font-size="10.5" fill="#9a9a9a" text-anchor="middle" font-family="Liberation Sans">15</text><line x1="789.6" y1="985" x2="789.6" y2="990" stroke="#6a6a6a" stroke-width="1.5"/><text x="788.6" y="1006" font-size="10.5" fill="#9a9a9a" text-anchor="middle" font-family="Liberation Sans">16</text><line x1="817.7" y1="985" x2="817.7" y2="990" stroke="#6a6a6a" stroke-width="1.5"/><text x="816.7" y="1006" font-size="10.5" fill="#9a9a9a" text-anchor="middle" font-family="Liberation Sans">17</text><line x1="845.7" y1="985" x2="845.7" y2="990" stroke="#6a6a6a" stroke-width="1.5"/><text x="844.7" y="1006" font-size="10.5" fill="#9a9a9a" text-anchor="middle" font-family="Liberation Sans">18</text><line x1="873.8" y1="985" x2="873.8" y2="990" stroke="#6a6a6a" stroke-width="1.5"/><text x="872.8" y="1006" font-size="10.5" fill="#9a9a9a" text-anchor="middle" font-family="Liberation Sans">19</text><line x1="901.8" y1="985" x2="901.8" y2="990" stroke="#6a6a6a" stroke-width="1.5"/><text x="900.8" y="1006" font-size="10.5" fill="#9a9a9a" text-anchor="middle" font-family="Liberation Sans">20</text><line x1="929.9" y1="985" x2="929.9" y2="990" stroke="#6a6a6a" stroke-width="1.5"/><text x="928.9" y="1006" font-size="10.5" fill="#9a9a9a" text-anchor="middle" font-family="Liberation Sans">21</text><line x1="957.9" y1="985" x2="957.9" y2="990" stroke="#6a6a6a" stroke-width="1.5"/><text x="956.9" y="1006" font-size="10.5" fill="#9a9a9a" text-anchor="middle" font-family="Liberation Sans">22</text><line x1="986.0" y1="985" x2="986.0" y2="990" stroke="#6a6a6a" stroke-width="1.5"/><text x="985.0" y="1006" font-size="10.5" fill="#9a9a9a" text-anchor="middle" font-family="Liberation Sans">23</text><line x1="1014.0" y1="985" x2="1014.0" y2="990" stroke="#6a6a6a" stroke-width="1.5"/><text x="1013.0" y="1006" font-size="10.5" fill="#9a9a9a" text-anchor="middle" font-family="Liberation Sans">24</text><text x="677" y="1022" font-size="10.5" fill="#9a9a9a" text-anchor="middle" font-family="Liberation Sans">Hours</text><text x="0" y="0" font-size="10" fill="#9a9a9a" text-anchor="middle" font-family="Liberation Sans" transform="translate(268,840) rotate(-90)">Date</text></svg>
<div class="a" style="left:1075px;top:598px;width:831px;height:459px;background:#1f1f1f;border-radius:4px;box-shadow:0 1px 3px rgba(0,0,0,.4)"></div>
<div class="t" style="left:1090px;top:616px;font-size:14px;color:#ddd">Energy Ranking Comparison</div>
<svg style="left:1803.3px;top:641.5px" width="80" height="26" viewBox="0 0 80 26"><circle cx="13" cy="13" r="13.4" fill="#303030"/><path d="M5.3 17.6 L10.9 11.6 L14.2 16 L21.2 7.1" fill="none" stroke="#fff" stroke-width="1.7" stroke-linecap="round" stroke-linejoin="round"/><path d="M5.3 9.4 C8.5 5.5 15.5 4.5 20.4 15.6" fill="none" stroke="#fff" stroke-width="1.7" stroke-linecap="round"/><path d="M32 8.7 H44.7 M32 12.5 H44.7 M32 16.3 H44.7" stroke="#fff" stroke-width="1.7"/><path d="M46.3 8.7 H47.9 M46.3 12.5 H47.9 M46.3 16.3 H47.9" stroke="#fff" stroke-width="1.7"/><circle cx="67.2" cy="7.3" r="1.75" fill="#fff"/><circle cx="67.2" cy="12.8" r="1.75" fill="#fff"/><circle cx="67.2" cy="18.3" r="1.75" fill="#fff"/></svg>
<svg style="left:0;top:0" width="1920" height="1080" viewBox="0 0 1920 1080"><rect x="1273.8" y="690.5" width="450.8" height="40.5" fill="#1e4d74" stroke="#2196f3" stroke-width="1.2"/><text x="1265" y="713.5" font-size="10.6" font-weight="bold" fill="#c8c8c8" text-anchor="end" font-family="Liberation Sans" letter-spacing="-0.15">demoStationVb3Cloud/AHU3</text><rect x="1273.8" y="749.0" width="418.8" height="41.5" fill="#1d6b4f" stroke="#1fb47a" stroke-width="1.2"/><text x="1265" y="772.5" font-size="10.6" font-weight="bold" fill="#c8c8c8" text-anchor="end" font-family="Liberation Sans" letter-spacing="-0.15">demoStationVb3Cloud/AHU5</text><rect x="1273.8" y="807.5" width="330.2" height="42" fill="#775a29" stroke="#d9982c" stroke-width="1.2"/><text x="1265" y="831.3" font-size="10.6" font-weight="bold" fill="#c8c8c8" text-anchor="end" font-family="Liberation Sans" letter-spacing="-0.15">demoStationVb3Cloud/AHU2</text><rect x="1273.8" y="866.5" width="330.2" height="41.5" fill="#76343e" stroke="#d9485c" stroke-width="1.2"/><text x="1265" y="890.0" font-size="10.6" font-weight="bold" fill="#c8c8c8" text-anchor="end" font-family="Liberation Sans" letter-spacing="-0.15">demoStationVb3Cloud/AHU4</text><rect x="1273.8" y="925.0" width="52.1" height="41.0" fill="#483e68" stroke="#7b62cc" stroke-width="1.2"/><text x="1265" y="948.3" font-size="10.6" font-weight="bold" fill="#c8c8c8" text-anchor="end" font-family="Liberation Sans" letter-spacing="-0.15">demoStation/Temp</text><line x1="1333.5" y1="681" x2="1333.5" y2="975" stroke="#c8c8c8" stroke-width="1" stroke-dasharray="4,3"/><line x1="1393.5" y1="681" x2="1393.5" y2="975" stroke="#c8c8c8" stroke-width="1" stroke-dasharray="4,3"/><line x1="1454.5" y1="681" x2="1454.5" y2="975" stroke="#c8c8c8" stroke-width="1" stroke-dasharray="4,3"/><line x1="1514.5" y1="681" x2="1514.5" y2="975" stroke="#c8c8c8" stroke-width="1" stroke-dasharray="4,3"/><line x1="1574.5" y1="681" x2="1574.5" y2="975" stroke="#c8c8c8" stroke-width="1" stroke-dasharray="4,3"/><line x1="1635.5" y1="681" x2="1635.5" y2="975" stroke="#c8c8c8" stroke-width="1" stroke-dasharray="4,3"/><line x1="1695.5" y1="681" x2="1695.5" y2="975" stroke="#c8c8c8" stroke-width="1" stroke-dasharray="4,3"/><line x1="1755.5" y1="681" x2="1755.5" y2="975" stroke="#c8c8c8" stroke-width="1" stroke-dasharray="4,3"/><line x1="1816.5" y1="681" x2="1816.5" y2="975" stroke="#c8c8c8" stroke-width="1" stroke-dasharray="4,3"/><line x1="1876.5" y1="681" x2="1876.5" y2="975" stroke="#c8c8c8" stroke-width="1" stroke-dasharray="4,3"/><line x1="1273.3" y1="975.5" x2="1877" y2="975.5" stroke="#aaa" stroke-width="1"/><line x1="1273.5" y1="975" x2="1273.5" y2="981" stroke="#aaa" stroke-width="1"/><text x="0" y="0" font-size="11.5" fill="#b8b8b8" text-anchor="end" font-family="Liberation Sans" transform="translate(1276.5,986) rotate(-45)">0</text><line x1="1333.5" y1="975" x2="1333.5" y2="981" stroke="#aaa" stroke-width="1"/><text x="0" y="0" font-size="11.5" fill="#b8b8b8" text-anchor="end" font-family="Liberation Sans" transform="translate(1336.5,986) rotate(-45)">10</text><line x1="1393.5" y1="975" x2="1393.5" y2="981" stroke="#aaa" stroke-width="1"/><text x="0" y="0" font-size="11.5" fill="#b8b8b8" text-anchor="end" font-family="Liberation Sans" transform="translate(1396.5,986) rotate(-45)">20</text><line x1="1454.5" y1="975" x2="1454.5" y2="981" stroke="#aaa" stroke-width="1"/><text x="0" y="0" font-size="11.5" fill="#b8b8b8" text-anchor="end" font-family="Liberation Sans" transform="translate(1457.5,986) rotate(-45)">30</text><line x1="1514.5" y1="975" x2="1514.5" y2="981" stroke="#aaa" stroke-width="1"/><text x="0" y="0" font-size="11.5" fill="#b8b8b8" text-anchor="end" font-family="Liberation Sans" transform="translate(1517.5,986) rotate(-45)">40</text><line x1="1574.5" y1="975" x2="1574.5" y2="981" stroke="#aaa" stroke-width="1"/><text x="0" y="0" font-size="11.5" fill="#b8b8b8" text-anchor="end" font-family="Liberation Sans" transform="translate(1577.5,986) rotate(-45)">50</text><line x1="1635.5" y1="975" x2="1635.5" y2="981" stroke="#aaa" stroke-width="1"/><text x="0" y="0" font-size="11.5" fill="#b8b8b8" text-anchor="end" font-family="Liberation Sans" transform="translate(1638.5,986) rotate(-45)">60</text><line x1="1695.5" y1="975" x2="1695.5" y2="981" stroke="#aaa" stroke-width="1"/><text x="0" y="0" font-size="11.5" fill="#b8b8b8" text-anchor="end" font-family="Liberation Sans" transform="translate(1698.5,986) rotate(-45)">70</text><line x1="1755.5" y1="975" x2="1755.5" y2="981" stroke="#aaa" stroke-width="1"/><text x="0" y="0" font-size="11.5" fill="#b8b8b8" text-anchor="end" font-family="Liberation Sans" transform="translate(1758.5,986) rotate(-45)">80</text><line x1="1816.5" y1="975" x2="1816.5" y2="981" stroke="#aaa" stroke-width="1"/><text x="0" y="0" font-size="11.5" fill="#b8b8b8" text-anchor="end" font-family="Liberation Sans" transform="translate(1819.5,986) rotate(-45)">90</text><line x1="1876.5" y1="975" x2="1876.5" y2="981" stroke="#aaa" stroke-width="1"/><text x="0" y="0" font-size="11.5" fill="#b8b8b8" text-anchor="end" font-family="Liberation Sans" transform="translate(1879.5,986) rotate(-45)">100</text><text x="0" y="0" font-size="13.5" fill="#a0a0a0" text-anchor="middle" font-family="Liberation Sans" transform="translate(1112,827.3) rotate(-90)">kW-hr</text></svg>
</body></html>
